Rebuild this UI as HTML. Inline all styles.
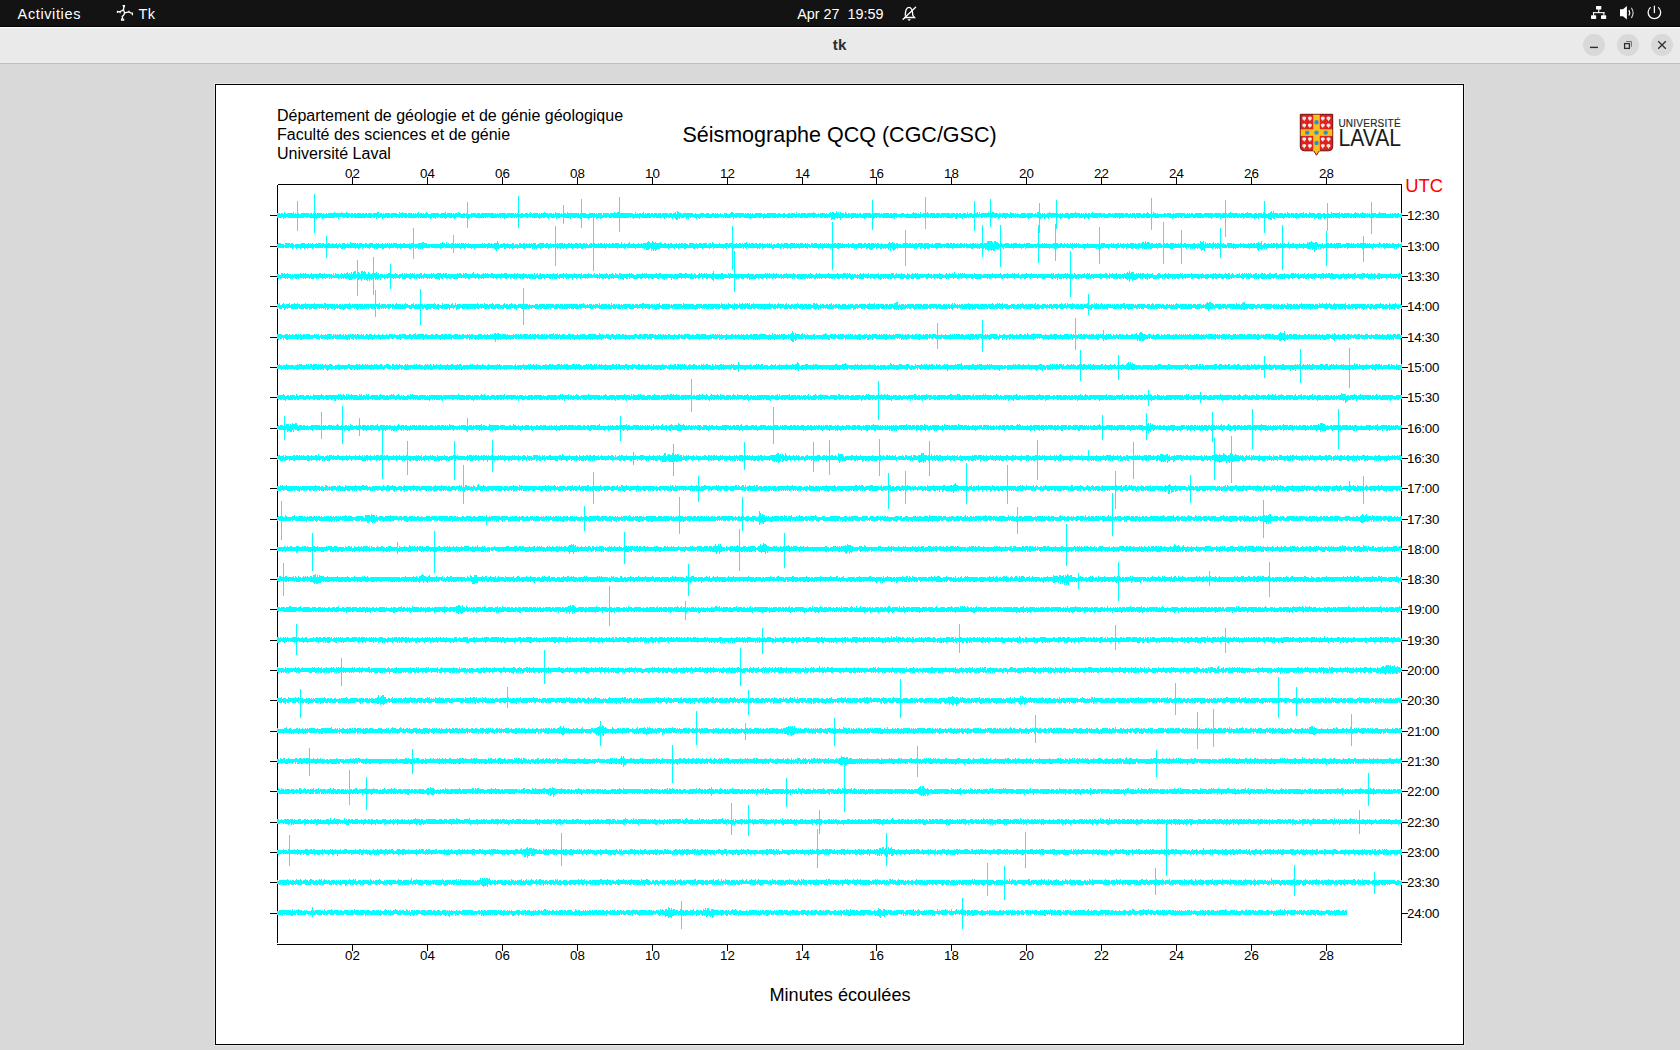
<!DOCTYPE html>
<html><head><meta charset="utf-8"><title>tk</title>
<style>
html,body{margin:0;padding:0;width:1680px;height:1050px;overflow:hidden;background:#d9d9d9;font-family:"Liberation Sans",sans-serif;}
#topbar{position:absolute;left:0;top:0;width:1680px;height:26px;background:#131313;border-bottom:1px solid #000;}
#titlebar{position:absolute;left:0;top:27px;width:1680px;height:36px;background:#ebebeb;border-top:1px solid #fff;border-bottom:1px solid #c2c2c2;box-sizing:border-box;height:37px;}
#frame{position:absolute;left:214px;top:83px;width:1251px;height:963px;box-sizing:border-box;border:1px solid #e6e6e6;}
#frame>div{position:absolute;left:0;top:0;right:0;bottom:0;border:1px solid #000;background:#fff;}
.tb{position:absolute;color:#fff;font-size:14px;white-space:pre;line-height:1;}
.wbtn{position:absolute;top:34px;width:22px;height:22px;border-radius:50%;background:#d9d9d9;}
</style></head><body>
<svg width="1680" height="1050" style="position:absolute;left:0;top:0">
<rect x="0" y="0" width="1680" height="26" fill="#131313"/>
<rect x="0" y="26" width="1680" height="1" fill="#000"/>
<rect x="0" y="27" width="1680" height="1" fill="#fff"/>
<rect x="0" y="28" width="1680" height="34" fill="#eaeaea"/>
<rect x="0" y="62" width="1680" height="1" fill="#eeeeee"/>
<rect x="0" y="63" width="1680" height="1" fill="#bebebe"/>
<g font-family="Liberation Sans" font-size="14.5" fill="#fff">
<text x="17.6" y="18.8" letter-spacing="0.62">Activities</text>
<text x="138.6" y="18.8" letter-spacing="0.3">Tk</text>
<text x="797.2" y="18.6" font-size="14.4" letter-spacing="0" xml:space="preserve">Apr 27  19:59</text>
</g>
<g fill="none" stroke="#fff" stroke-width="1.3" stroke-linecap="square" stroke-linejoin="miter">
<path d="M123.2 5.6H124.4V6.6M123.8 6.6L123.5 9.6L122.2 10.6L120.3 11.3L118.6 11.6L117.5 11.5V12.4M120.1 11.6V12.6M123.5 9.6L124.6 12.9L126.8 12.4L128.9 11.9L130.8 12.8L132.4 13V14.6M128.9 11.5V12.2M124.6 12.9L123.6 15.4L122.2 16.4L122.6 18.2L121.6 19.2V20.2H123.6V19.4"/>
</g>
<g fill="none" stroke="#fff" stroke-width="1.3" stroke-linecap="round">
<path d="M905.3 15.3C905.3 11.2 906.2 7.3 909 7.3C911.8 7.3 912.6 11.2 912.8 15.3L914.6 17.5H904.6"/>
<path d="M903.1 19.3L915.6 7.2"/>
</g>
<path d="M907.3 19.3H911L909.15 21Z" fill="#fff"/>
<g fill="#fff">
<rect x="1596" y="6" width="5.3" height="3.5" rx="0.6"/>
<rect x="1598.2" y="9" width="1.1" height="3.8"/>
<rect x="1592.9" y="12.1" width="11.6" height="1.1"/>
<rect x="1593" y="12.1" width="1.1" height="3.5"/>
<rect x="1603.3" y="12.1" width="1.1" height="3.5"/>
<rect x="1591" y="15.2" width="5.2" height="3.7" rx="0.6"/>
<rect x="1601" y="15.2" width="5.2" height="3.7" rx="0.6"/>
<path d="M1620 9.2H1623L1626.9 6V19.5L1623 16.2H1620Z"/>
</g>
<g fill="none" stroke="#fff" stroke-linecap="round">
<path d="M1629.1 10.6Q1630.3 12.8 1629.1 15" stroke-width="1.2"/>
<path d="M1631.6 8.2Q1634.6 12.8 1631.6 17.6" stroke-width="1.1" stroke-opacity="0.85"/>
<path d="M1650.3 7.6A6.3 6.3 0 1 0 1658.5 7.6" stroke-width="1.25"/>
<path d="M1654.4 6V12.6" stroke-width="1.25"/>
</g>
<text x="839.6" y="50.2" font-family="Liberation Sans" font-size="15.2" font-weight="bold" fill="#2e2e2e" text-anchor="middle">tk</text>
<circle cx="1594" cy="45" r="11" fill="#d9d9d9"/>
<circle cx="1628" cy="45" r="11" fill="#d9d9d9"/>
<circle cx="1662" cy="45" r="11" fill="#d9d9d9"/>
<rect x="1590" y="46.7" width="8" height="1.4" fill="#2e2e2e"/>
<rect x="1624.6" y="43.6" width="4.8" height="4.8" fill="none" stroke="#2e2e2e" stroke-width="1.3"/>
<path d="M1626.2 41.5H1631.4V46.8" fill="none" stroke="#6e6e6e" stroke-width="1"/>
<path d="M1658.2 41.2L1665.8 48.8M1665.8 41.2L1658.2 48.8" stroke="#2e2e2e" stroke-width="1.3"/>
</svg>
<div id="frame"><div></div></div>
<svg width="1680" height="1050" style="position:absolute;left:0;top:0" shape-rendering="crispEdges">
<g stroke="#000" stroke-width="1" fill="none">
<path d="M277.5 184.5H1401.5V942.5M277.5 184.5V942.5M277 944.5H1401.6"/>
<path d="M352.5 177V184M352.5 945V951M427.5 177V184M427.5 945V951M502.5 177V184M502.5 945V951M577.5 177V184M577.5 945V951M652.5 177V184M652.5 945V951M727.5 177V184M727.5 945V951M802.5 177V184M802.5 945V951M876.5 177V184M876.5 945V951M951.5 177V184M951.5 945V951M1026.5 177V184M1026.5 945V951M1101.5 177V184M1101.5 945V951M1176.5 177V184M1176.5 945V951M1251.5 177V184M1251.5 945V951M1326.5 177V184M1326.5 945V951M270 215.5H277M1402 215.5H1408M270 246.5H277M1402 246.5H1408M270 276.5H277M1402 276.5H1408M270 306.5H277M1402 306.5H1408M270 337.5H277M1402 337.5H1408M270 367.5H277M1402 367.5H1408M270 397.5H277M1402 397.5H1408M270 428.5H277M1402 428.5H1408M270 458.5H277M1402 458.5H1408M270 488.5H277M1402 488.5H1408M270 519.5H277M1402 519.5H1408M270 549.5H277M1402 549.5H1408M270 579.5H277M1402 579.5H1408M270 609.5H277M1402 609.5H1408M270 640.5H277M1402 640.5H1408M270 670.5H277M1402 670.5H1408M270 700.5H277M1402 700.5H1408M270 731.5H277M1402 731.5H1408M270 761.5H277M1402 761.5H1408M270 791.5H277M1402 791.5H1408M270 822.5H277M1402 822.5H1408M270 852.5H277M1402 852.5H1408M270 882.5H277M1402 882.5H1408M270 913.5H277M1402 913.5H1408"/>
</g>
<g stroke="#00ffff" stroke-width="1" fill="none">
<path d="M277 211.5h1125" stroke-dasharray="0 400 1 158 1 434 1 1 1 128"/>
<path d="M277 212.5h1125" stroke-dasharray="0 7 1 8 1 40 1 6 1 4 1 30 2 20 1 2 1 15 1 7 1 18 1 12 1 71 1 13 1 10 1 11 1 46 1 2 2 16 1 7 1 31 1 1 2 52 2 63 1 16 1 16 1 1 2 2 1 1 1 1 1 4 1 67 1 6 1 6 1 39 1 9 1 1 1 8 1 3 2 16 1 26 2 10 1 25 1 16 1 54 1 5 1 76 1 16 1 15 1 6 2 1 1 13 1 15 1 5 1 21 1 7 1 15 1 6 1 16 1 22"/>
<path d="M277 213.5h1125" stroke-dasharray="3 1 2 1 2 1 7 1 1 1 2 2 8 1 2 1 1 1 1 1 5 1 1 2 1 1 22 1 2 1 2 1 4 1 2 1 2 1 4 1 6 1 2 1 1 1 5 1 6 2 8 1 4 1 1 1 1 1 2 1 2 1 1 1 3 3 8 2 5 1 5 1 1 1 6 2 2 1 2 3 5 1 3 1 13 1 1 1 1 1 7 1 7 1 1 1 1 3 2 2 3 1 3 1 5 1 1 1 7 1 3 1 1 1 5 1 1 2 2 1 12 1 1 1 4 3 6 1 1 1 4 1 6 1 23 2 1 1 1 1 2 1 2 1 1 1 3 1 2 1 3 1 3 1 6 1 3 1 3 1 5 1 10 2 1 4 4 2 3 3 2 1 1 1 1 2 1 3 3 3 4 1 9 1 1 1 2 1 1 1 1 2 7 2 1 2 9 2 2 3 2 3 2 1 4 1 1 1 2 1 5 1 9 2 1 1 5 1 1 2 10 1 4 1 2 1 2 1 5 1 1 1 2 2 8 2 7 1 1 1 6 1 2 1 4 4 3 3 1 4 5 1 1 1 1 2 6 1 5 1 4 1 9 1 4 1 2 1 2 2 3 1 1 1 3 3 3 1 1 1 17 1 2 1 6 2 4 1 1 1 1 3 5 1 6 2 1 1 4 1 1 1 1 2 11 2 1 1 1 2 4 1 10 1 1 1 1 1 2 1 2 1 11 1 2 3 3 1 1 1 10 1 3 2 1 1 3 1 5 2 2 1 3 4 3 1 1 6 2 1 4 2 1 1 10 2 1 1 1 1 2 2 7 2 9 1 7 1 5 1 10 1 1 1 3 1 7 2 3 1 4 1 1 1 1 2 10 1 4 1 2 1 3 1 3 1 3 1 5 1 2 2 6 2 4 2 2 3 1 2 9 1 2 1 6 1 1 2 5 1 6 1 1 1 1 1 5 2 8 4 1 1 1 1 2 1 2 2 1 0"/>
<path d="M277 214.5h1125" stroke-dasharray="325 1 120 1 678 0"/>
<path d="M277 216.5h1125" stroke-dasharray="188 1 717 1 218 0"/>
<path d="M277 217.5h1125" stroke-dasharray="5 1 3 2 9 1 6 2 2 1 5 1 5 1 14 1 1 1 1 4 2 1 3 2 2 1 12 1 5 1 2 1 1 1 2 2 4 1 3 1 2 3 1 1 2 1 2 1 3 1 9 1 1 1 7 1 4 1 3 1 1 2 3 1 3 2 3 1 3 4 5 1 4 1 1 3 9 1 1 1 1 2 7 1 1 1 1 1 7 1 3 1 1 1 1 1 1 1 3 3 2 2 1 1 5 1 4 1 2 2 2 2 4 1 4 3 8 1 4 1 4 2 9 2 1 1 8 1 2 2 3 1 16 1 1 1 8 1 10 2 2 1 6 1 2 1 1 1 2 1 2 1 6 1 3 2 3 1 1 3 3 1 3 1 1 2 7 2 5 2 1 1 1 1 6 2 1 1 2 2 2 3 13 1 3 2 8 1 4 1 2 1 1 2 2 2 6 2 2 1 1 1 3 1 4 1 1 3 2 1 1 3 3 1 4 1 1 1 13 1 5 1 3 1 4 1 7 1 4 1 2 1 1 2 2 1 13 1 1 3 2 3 16 3 2 1 2 1 1 1 7 1 2 1 1 2 7 2 3 1 4 1 3 1 1 1 1 1 3 1 1 1 1 2 2 1 1 1 1 4 2 1 2 2 2 2 1 1 3 2 3 1 1 1 1 1 1 1 7 1 5 5 6 1 2 1 2 2 2 1 1 1 2 1 4 1 10 1 2 2 4 1 2 1 3 2 6 1 1 1 1 2 5 4 3 1 1 1 5 2 1 1 2 1 2 1 2 1 3 1 4 1 4 2 1 1 5 2 1 2 1 4 8 1 1 1 2 2 7 2 3 1 7 2 1 1 5 3 3 1 5 2 1 1 3 1 3 1 2 1 2 1 2 1 4 1 8 1 15 1 9 1 1 1 2 1 1 1 7 1 4 1 1 1 2 1 2 1 8 1 9 1 1 1 5 2 5 1 1 1 2 1 3 1 1 1 1 1 5 1 1 1 2 1 2 2 18 1 3 2 2 0"/>
<path d="M277 218.5h1125" stroke-dasharray="0 6 1 32 1 5 1 15 1 37 1 5 1 47 1 4 1 9 1 8 1 13 1 35 1 34 1 8 1 7 1 13 1 9 1 7 1 7 1 3 1 32 1 5 1 24 1 7 1 2 3 1 1 6 1 1 1 7 1 2 1 33 1 16 1 12 1 67 4 2 1 2 1 10 1 12 1 8 1 20 1 20 1 39 2 5 1 35 1 6 1 22 1 11 1 3 1 3 1 11 1 7 2 14 1 3 1 30 1 15 1 36 1 38 1 8 1 22 1 10 1 3 1 9 4 1 2 8 1 12 1 17 1 3 1 1 1 3 1 14 1 62"/>
<path d="M277 219.5h1125" stroke-dasharray="0 399 2 153 1 2 1 5 1 429 2 130"/>
<rect x="277" y="215" width="1125" height="1" fill="#00ffff" stroke="none"/>
<path d="M277 241.5h1125" stroke-dasharray="0 220 1 150 1 3 1 334 5 2 2 149 1 54 1 2 1 57 1 49 1 90"/>
<path d="M277 242.5h1125" stroke-dasharray="0 73 1 71 2 18 1 3 1 50 1 123 1 7 1 17 3 2 2 1 1 4 1 51 1 33 1 142 1 2 1 94 6 1 4 144 2 1 1 1 2 51 4 1 1 7 1 44 1 2 1 26 1 18 1 1 4 2 2 62 1 21 1 0"/>
<path d="M277 243.5h1125" stroke-dasharray="0 1 3 4 5 1 2 8 4 3 1 1 1 1 1 3 1 1 3 1 2 2 1 1 2 2 1 3 1 2 1 2 3 2 1 2 6 1 1 1 3 3 2 2 4 3 1 1 1 3 1 2 1 1 1 1 1 1 1 1 4 3 1 2 2 4 1 1 2 5 9 13 5 1 1 1 1 2 3 1 1 1 1 1 1 1 3 1 1 2 1 13 1 1 1 3 2 1 1 2 5 4 2 2 1 4 2 5 2 2 2 1 1 2 1 1 1 1 3 3 5 2 2 2 1 6 1 1 4 1 1 3 2 1 1 3 3 1 2 2 2 1 1 3 2 2 1 3 1 1 2 2 1 1 1 2 1 2 2 1 4 2 1 2 1 3 2 3 1 4 1 2 1 1 19 2 2 2 1 1 2 4 1 2 1 1 2 1 2 3 5 2 1 2 3 1 4 2 2 1 2 5 1 5 3 1 3 4 1 2 2 1 1 1 3 2 1 1 3 1 2 2 2 1 1 4 1 1 1 1 1 5 2 2 1 2 4 2 5 1 1 1 1 1 3 2 1 1 1 3 2 1 3 3 1 1 1 1 1 1 1 1 1 5 2 1 4 1 1 5 1 3 2 4 4 2 2 2 2 1 3 1 1 1 2 2 1 6 7 1 2 5 2 1 2 1 2 1 1 2 2 1 5 1 5 3 1 2 6 5 3 1 2 1 2 2 1 2 2 2 1 1 1 3 1 1 2 1 1 1 1 2 2 2 9 1 5 2 1 3 4 2 1 1 4 2 1 4 1 1 4 7 1 4 1 1 1 1 1 6 2 1 2 2 2 2 1 2 1 2 1 1 1 1 1 1 1 1 1 8 1 13 4 6 1 1 1 3 2 1 1 2 1 3 1 2 4 1 1 2 2 1 9 1 2 3 1 1 3 3 1 1 2 2 4 1 1 2 1 1 1 3 2 7 2 3 1 1 4 1 1 1 1 1 2 1 2 1 1 1 2 1 2 1 1 3 5 1 1 6 1 2 1 4 1 1 2 1 2 1 6 2 2 2 1 2 1 1 2 1 2 2 1 3 1 3 1 3 2 5 1 3 1 3 11 4 1 4 2 1 2 2 1 1 5 5 4 1 1 1 1 3 2 1 6 1 1 1 1 3 1 5 2 2 2 1 2 1 1 2 2 4 1 2 1 0"/>
<path d="M277 244.5h1125" stroke-dasharray="7 1 9 1 42 1 3 1 157 1 14 1 3 1 17 1 51 1 99 1 18 1 64 1 2 1 34 1 90 1 31 1 147 1 37 1 42 1 63 1 35 1 60 1 17 1 60 0"/>
<path d="M277 247.5h1125" stroke-dasharray="7 1 4 1 4 1 19 1 8 1 15 1 21 1 2 1 1 1 4 1 15 1 6 1 19 1 15 1 13 1 21 1 19 1 16 1 27 1 12 1 7 1 1 1 37 1 14 1 18 1 48 1 36 1 14 1 2 1 1 1 9 1 1 1 2 1 13 1 4 1 15 1 21 1 3 1 2 1 20 1 12 1 1 1 2 1 14 1 9 1 42 2 10 1 12 1 1 1 16 1 2 1 35 1 2 1 19 1 9 1 2 1 23 1 3 1 7 1 3 1 19 1 6 1 5 1 9 1 4 1 36 1 19 1 1 1 2 1 1 1 24 1 6 1 5 1 11 1 1 2 32 1 10 1 30 1 1 1 23 1 2 1 9 1 17 1 1 2 2 1 1 1 12 1 3 1 2 0"/>
<path d="M277 248.5h1125" stroke-dasharray="0 15 1 3 1 3 1 3 1 2 1 4 1 24 1 3 2 1 1 10 1 2 1 3 1 6 1 4 1 1 2 4 2 5 1 7 1 2 1 8 2 4 1 2 1 1 1 1 1 17 1 10 1 8 1 3 1 6 1 2 1 12 1 6 5 5 2 3 1 2 1 4 1 5 2 7 1 1 1 1 1 3 1 7 1 6 1 1 1 2 1 2 1 2 1 5 1 4 1 3 2 2 1 19 1 11 1 6 1 10 1 8 1 1 4 1 9 8 1 5 1 3 1 5 2 7 2 2 1 4 1 6 1 3 1 9 1 2 1 6 1 9 1 2 1 10 1 1 1 2 1 9 2 6 1 2 1 3 1 2 1 8 1 7 1 10 1 3 1 7 1 6 2 15 1 1 1 4 1 4 1 2 4 3 1 3 2 1 1 1 1 2 1 1 1 1 4 1 1 16 1 1 1 3 1 3 2 1 2 7 1 15 1 18 2 4 1 1 1 3 1 1 14 1 1 2 1 9 1 7 1 3 1 12 1 10 1 4 1 1 1 15 1 11 1 11 1 1 1 1 1 7 1 7 1 6 1 2 1 4 2 2 2 1 1 3 1 1 3 1 1 1 2 5 1 12 3 13 1 3 1 1 1 1 1 2 1 2 5 7 1 2 1 1 1 1 1 13 1 1 1 13 1 7 6 1 1 1 1 9 1 12 1 6 1 6 1 3 4 1 5 1 1 1 1 2 1 2 1 8 1 1 1 9 1 14 2 8 1 11 1 9 1 1 1 5"/>
<path d="M277 249.5h1125" stroke-dasharray="0 218 2 149 3 2 1 1 1 1 2 213 2 16 1 1 1 2 2 90 1 1 8 2 1 203 4 52 2 2 1 50 1 1 3 85"/>
<path d="M277 250.5h1125" stroke-dasharray="0 219 1 154 1 1 1 1 1 234 1 2 1 94 1 2 1 1 2 206 1 2 1 53 1 55 1 87"/>
<path d="M277 251.5h1125" stroke-dasharray="0 1037 1 87"/>
<rect x="277" y="245" width="1125" height="2" fill="#00ffff" stroke="none"/>
<path d="M277 271.5h1125" stroke-dasharray="0 77 2 1 1 3 2 1 1 348 1 415 1 272"/>
<path d="M277 272.5h1125" stroke-dasharray="0 70 1 3 1 1 3 1 2 2 5 2 1 7 1 96 1 239 1 240 1 172 1 1 1 1 3 268"/>
<path d="M277 273.5h1125" stroke-dasharray="0 4 2 1 1 2 1 12 1 2 1 1 1 5 1 7 2 3 1 8 1 1 1 5 1 2 1 1 2 1 1 1 1 1 3 1 3 1 5 2 2 2 5 1 1 9 3 4 1 6 1 1 1 1 1 3 1 1 1 1 1 5 2 2 1 6 1 1 1 3 4 2 1 1 2 10 1 1 2 2 1 1 2 5 2 3 1 5 1 1 1 1 1 3 2 8 1 2 3 7 1 2 1 5 1 10 1 2 1 2 1 12 1 3 1 5 1 2 1 7 1 6 1 6 1 5 1 4 1 6 1 5 1 2 1 3 2 8 1 1 1 10 1 1 1 1 1 9 1 2 2 18 3 3 2 4 1 2 1 4 1 1 1 2 1 1 1 5 2 7 2 5 1 1 1 17 1 16 1 1 1 1 1 3 1 2 1 9 1 6 1 16 1 5 1 2 1 8 1 8 1 5 3 1 1 1 1 10 1 2 1 4 1 9 1 12 3 2 1 4 1 5 1 4 1 2 1 1 1 10 1 10 1 6 1 2 1 2 1 1 1 3 1 1 1 1 1 1 1 9 1 17 1 7 1 6 1 4 1 1 1 3 1 7 1 4 1 19 1 1 1 4 1 6 1 1 1 6 1 9 1 2 1 1 1 10 1 4 2 2 1 2 1 3 1 7 1 1 8 2 1 1 1 1 1 1 2 3 1 4 1 5 2 5 1 2 1 11 1 1 1 8 1 10 1 10 1 1 1 3 1 5 1 2 2 2 1 6 1 2 1 1 1 1 1 1 1 1 1 4 2 4 2 1 1 4 2 4 2 7 1 6 3 1 1 2 1 5 1 3 1 5 2 6 2 2 1 1 2 1 2 10 1 4 1 5 2 6 3 2 1 3 1 2 1 3 2 10 1 8 1 2"/>
<path d="M277 274.5h1125" stroke-dasharray="2 2 10 1 1 1 15 1 22 1 1 1 4 1 39 1 3 1 1 1 12 1 4 1 11 1 6 1 24 1 14 1 17 1 46 1 5 1 1 1 2 1 6 1 12 1 23 1 9 1 2 1 2 1 9 1 5 1 3 1 15 2 37 1 19 1 2 2 29 1 26 1 24 1 2 1 13 1 10 1 5 2 36 1 1 1 2 1 1 1 10 1 9 1 14 1 10 2 3 1 21 1 10 2 12 1 15 1 8 1 19 1 16 2 16 1 16 1 18 1 2 1 4 1 3 1 4 1 17 1 8 1 3 1 31 4 4 1 1 1 19 1 20 1 4 1 13 1 6 1 3 2 4 1 11 1 4 1 1 1 6 1 10 2 10 1 9 1 5 1 11 1 21 1 16 1 19 1 25 0"/>
<path d="M277 277.5h1125" stroke-dasharray="51 1 72 1 31 1 9 1 45 1 19 1 54 1 28 1 34 1 72 1 93 1 68 1 59 1 103 1 81 1 52 1 26 1 44 1 9 1 50 1 68 1 31 1 4 0"/>
<path d="M277 278.5h1125" stroke-dasharray="0 1 1 1 1 4 1 1 1 2 1 1 1 2 2 1 1 4 1 1 1 3 1 1 3 2 1 1 1 3 1 2 1 3 1 1 1 6 1 2 1 1 1 1 2 1 5 1 2 2 5 1 10 1 4 1 1 3 1 2 1 5 1 1 1 3 1 2 4 3 2 3 1 1 1 2 1 1 1 1 1 3 1 1 1 1 1 3 5 1 2 3 1 2 2 2 5 7 1 2 2 5 1 2 1 2 1 1 1 9 1 2 1 3 1 4 2 3 1 2 2 1 1 3 1 1 2 3 1 1 2 1 4 2 4 2 1 4 2 1 1 1 3 2 1 3 1 2 1 1 1 3 1 3 1 3 1 4 1 1 1 9 1 1 1 2 2 1 1 2 2 1 1 1 1 4 1 1 4 2 2 1 1 3 5 2 2 3 1 2 1 2 3 3 2 3 3 1 1 4 1 1 2 1 2 3 1 3 1 4 4 1 1 2 1 3 1 3 2 3 3 1 4 1 4 5 1 6 1 1 1 2 3 3 1 1 7 2 1 2 2 3 1 2 1 2 1 2 1 5 1 1 1 3 1 4 1 1 1 2 2 1 3 1 2 1 1 1 1 1 1 2 2 1 1 1 1 1 1 3 1 3 1 1 2 1 1 2 3 2 1 3 2 2 4 3 1 1 5 3 1 2 1 2 2 3 4 1 1 1 1 1 2 1 2 2 1 5 4 2 3 2 3 2 4 6 2 3 1 2 1 2 1 1 3 4 1 1 1 4 1 3 2 2 1 4 1 4 2 2 6 6 1 1 2 4 1 5 2 4 1 6 1 5 1 3 2 4 1 6 1 4 3 6 2 2 1 1 1 1 3 1 1 2 1 2 4 2 2 1 1 2 1 4 3 1 1 2 1 6 2 4 1 2 1 3 2 1 2 1 2 2 1 1 13 2 1 1 1 2 3 1 1 3 4 1 1 3 1 1 1 2 2 3 1 1 2 1 2 3 1 2 1 5 2 4 3 1 1 3 3 4 2 1 2 4 3 2 1 1 2 1 1 10 2 2 1 1 2 4 1 1 1 1 1 2 4 1 1 1 3 2 1 2 1 1 1 1 5 3 2 2 1 5 2 3 1 1 2 1 1 2 2 1 1 5 1 2 1 1 1 4 1 1 4 2 4 2 1 1 1 2 1 2 1 1 1 4 2 1 1 5 1 1 1 1 1 1 1 2 3 1 1 4 1 4 1 1 1 1 1 2 2 2"/>
<path d="M277 279.5h1125" stroke-dasharray="0 72 3 6 1 2 1 2 1 1 2 1 1 1 1 3 1 1 1 2 1 58 1 132 1 50 1 40 1 6 1 40 2 35 1 101 1 28 1 176 1 69 1 1 1 2 4 11 1 254"/>
<path d="M277 280.5h1125" stroke-dasharray="0 84 1 5 1 1 1 343 1 415 1 2 1 269"/>
<path d="M277 281.5h1125" stroke-dasharray="0 852 1 272"/>
<rect x="277" y="275" width="1125" height="2" fill="#00ffff" stroke="none"/>
<path d="M277 302.5h1125" stroke-dasharray="0 619 2 309 1 1 2 32 2 157"/>
<path d="M277 303.5h1125" stroke-dasharray="0 2 1 3 1 5 1 4 1 2 1 7 1 8 1 9 2 23 1 29 1 16 1 8 1 7 1 20 1 7 1 9 1 2 1 21 1 6 1 7 1 11 1 6 1 71 1 15 1 11 1 30 2 15 1 23 1 37 1 6 1 5 1 4 1 2 1 2 1 1 1 1 1 3 1 15 1 8 1 7 1 10 1 15 2 1 1 14 1 37 1 4 1 19 4 54 1 1 1 13 1 23 1 4 1 1 1 2 1 19 1 12 1 25 1 3 1 1 1 4 1 14 1 6 1 1 1 4 1 21 2 27 1 23 1 29 7 23 1 5 3 42 1 13 1 17 1 2 1 3 1 2 1 4 1 10 1 34 1 8 1 5 1 6"/>
<path d="M277 304.5h1125" stroke-dasharray="3 2 3 1 4 1 9 1 22 1 11 1 2 1 2 1 1 1 7 1 11 1 16 1 5 1 4 1 2 1 6 1 1 1 4 3 3 1 2 1 2 1 2 1 1 1 10 1 2 3 1 1 5 2 2 2 1 1 4 1 17 1 3 1 4 1 5 1 5 3 2 1 2 1 4 1 2 2 5 1 4 1 1 5 3 1 6 1 8 1 4 1 3 1 14 1 6 2 1 1 3 1 1 1 3 1 1 1 6 1 2 1 1 1 2 1 1 1 2 1 1 1 8 1 2 1 3 1 11 1 2 1 1 1 4 2 8 1 1 1 9 1 11 2 6 1 4 1 12 1 4 1 1 1 3 1 1 1 4 1 11 1 22 1 2 1 7 1 2 1 1 2 2 1 5 1 3 1 3 1 3 2 5 2 1 1 2 2 2 1 3 1 1 1 2 1 2 2 4 2 1 1 3 2 3 1 7 1 8 1 8 1 3 1 4 1 4 1 1 1 3 1 1 1 7 1 7 1 5 1 8 1 3 2 2 1 1 1 2 1 2 1 2 1 1 1 1 1 2 1 9 1 5 1 7 1 6 1 8 1 4 3 4 2 2 1 4 1 2 1 5 1 2 1 2 3 4 1 1 1 3 1 5 1 4 1 2 1 8 1 3 1 3 1 5 2 2 1 5 1 3 1 1 1 5 1 1 1 1 1 3 1 5 1 8 1 1 1 8 2 3 1 3 1 6 1 2 2 2 1 1 1 1 1 1 1 4 1 7 1 4 1 3 1 4 2 1 1 9 1 6 1 4 1 8 1 4 1 14 2 3 1 11 1 2 1 1 1 1 2 2 1 1 2 5 1 2 1 2 1 15 1 3 1 13 1 13 2 2 1 15 1 2 1 3 2 9 1 2 2 2 1 5 1 1 1 1 1"/>
<path d="M277 305.5h1125" stroke-dasharray="1092 1 32 0"/>
<path d="M277 307.5h1125" stroke-dasharray="99 1 14 1 63 1 881 1 64 0"/>
<path d="M277 308.5h1125" stroke-dasharray="1 1 3 2 2 1 1 3 7 1 5 1 3 1 3 1 4 2 1 1 1 1 1 1 1 1 2 2 2 1 2 1 1 1 7 1 4 3 1 1 3 1 5 1 1 1 1 2 2 1 2 1 3 1 1 1 1 1 1 2 2 2 1 1 12 3 3 2 7 1 2 1 6 2 2 1 3 2 2 1 4 1 1 3 1 2 4 2 3 1 7 1 2 1 2 2 1 2 3 1 2 1 5 1 2 1 1 1 2 2 5 3 3 4 6 1 2 1 1 3 4 1 2 1 6 1 1 3 4 1 2 1 6 1 1 1 3 1 4 1 1 4 1 4 4 1 1 3 8 1 4 1 3 1 4 1 1 1 3 2 5 3 1 4 1 2 1 1 3 2 1 1 6 1 9 2 1 1 7 1 1 1 14 1 1 2 1 1 1 1 3 1 4 1 2 1 2 2 7 3 3 1 2 2 3 1 2 1 5 1 2 2 2 1 11 2 3 1 1 2 1 3 4 1 3 1 2 1 1 2 2 1 3 1 5 2 4 1 1 1 1 2 1 1 1 1 7 1 1 2 1 1 11 2 3 1 1 3 2 1 1 2 8 1 4 1 4 1 1 1 4 1 6 1 6 1 1 1 2 2 4 1 3 1 6 1 2 2 1 2 2 1 9 1 1 1 2 4 1 2 1 1 5 1 3 1 4 1 8 1 2 1 6 1 2 1 2 1 1 2 5 1 1 1 2 1 3 1 1 2 2 1 5 3 6 1 3 2 1 2 1 1 2 3 2 2 4 2 1 3 4 1 9 3 1 1 3 2 7 1 6 5 4 1 1 1 2 2 2 1 6 3 2 1 1 1 3 3 2 1 5 1 2 1 1 1 1 1 4 3 8 2 12 3 5 1 1 3 8 1 1 3 4 1 1 1 2 3 1 1 16 1 5 1 2 3 2 2 1 1 5 2 2 1 3 1 4 1 4 1 10 1 2 1 1 1 1 1 5 1 4 6 4 2 7 1 5 1 2 1 4 1 1 2 3 1 1 1 4 1 1 2 3 1 4 2 1 2 6 1 6 2 2 2 1 0"/>
<path d="M277 309.5h1125" stroke-dasharray="0 7 1 24 1 15 1 1 1 6 1 8 1 13 1 62 1 5 2 10 1 10 1 6 1 59 1 138 2 38 1 38 1 29 1 37 1 12 1 2 1 34 1 40 1 1 1 1 1 2 1 12 1 37 1 16 1 2 1 57 1 59 2 15 1 17 1 2 1 79 2 31 1 1 2 45 1 19 1 24 1 9 1 9 1 7 1 6 1 18 1 4 1 7"/>
<path d="M277 310.5h1125" stroke-dasharray="0 931 1 193"/>
<rect x="277" y="306" width="1125" height="1" fill="#00ffff" stroke="none"/>
<path d="M277 331.5h1125" stroke-dasharray="0 515 1 491 1 117"/>
<path d="M277 332.5h1125" stroke-dasharray="0 515 1 347 2 138 1 3 1 117"/>
<path d="M277 333.5h1125" stroke-dasharray="0 138 1 78 2 1 2 54 1 45 1 172 1 18 3 1 1 6 1 22 1 201 1 5 1 102 1 2 4 136 6 49 1 67"/>
<path d="M277 334.5h1125" stroke-dasharray="5 3 3 1 1 2 1 2 2 1 1 1 1 2 2 1 4 4 1 1 1 1 1 2 1 3 1 1 5 1 1 1 1 1 1 1 2 2 1 1 1 2 1 1 1 1 2 1 1 1 2 2 1 1 1 2 2 1 3 2 1 3 1 3 1 3 1 2 4 1 1 4 2 1 4 3 2 2 3 1 7 1 2 4 2 2 3 3 2 1 3 1 3 3 4 1 1 2 2 3 1 1 1 1 2 5 4 2 1 2 1 2 1 1 1 1 7 1 4 1 1 5 1 1 2 1 1 1 2 1 5 1 2 1 1 1 2 1 2 2 2 1 1 1 1 2 5 1 3 1 1 2 3 3 3 1 2 3 1 2 1 1 3 3 8 3 2 1 1 3 3 2 3 2 1 1 2 2 2 1 1 8 3 2 3 1 5 1 5 1 1 2 1 1 1 2 1 1 1 2 2 4 1 3 2 1 1 2 6 2 1 3 4 1 5 4 1 1 2 1 1 1 1 1 1 1 1 4 1 4 2 2 1 2 1 2 1 1 1 2 2 2 2 1 5 1 7 3 1 2 1 1 2 1 1 1 1 1 4 3 1 1 4 1 5 1 2 1 1 2 1 5 2 8 4 3 3 1 2 2 1 1 4 2 1 1 1 1 1 1 1 2 1 2 3 3 1 1 1 2 1 2 5 2 1 1 1 1 2 1 1 2 1 3 1 1 6 1 1 2 1 1 2 3 1 2 2 1 3 2 1 1 3 1 2 1 4 5 1 3 1 4 1 1 1 1 1 1 4 1 2 3 1 1 1 1 4 1 2 1 4 3 1 1 1 2 7 2 1 3 2 4 2 1 1 3 1 2 3 2 2 1 2 2 11 3 1 4 2 1 4 3 1 3 5 1 2 1 1 4 1 1 2 1 2 1 1 2 1 1 3 2 1 1 1 1 1 1 1 3 1 1 3 2 1 2 1 2 2 1 1 3 2 3 2 1 3 2 7 2 3 2 1 2 3 2 1 2 1 2 3 3 1 1 2 2 1 1 1 1 1 1 1 1 1 1 2 3 1 1 3 2 1 1 1 2 1 1 5 1 2 1 1 1 1 2 3 1 1 1 2 3 3 1 1 1 4 1 1 2 5 1 3 1 2 2 1 1 1 1 6 1 2 4 8 1 1 1 3 1 4 2 1 4 2 2 2 1 1 1 1 1 2 2 1 2 1 3 4 2 1 1 2 2 1 3 3 2 3 1 1 2 2 1 3 1 1 3 3 3 1 3 3 1 1 2 1 4 2 1 1 2 3 1 3 2"/>
<path d="M277 335.5h1125" stroke-dasharray="42 1 12 1 11 1 19 1 450 1 37 1 144 1 113 1 47 1 241 0"/>
<path d="M277 338.5h1125" stroke-dasharray="2 1 2 1 1 1 14 1 13 3 4 1 2 1 7 1 2 1 15 1 3 1 2 1 17 1 1 1 12 1 3 2 6 2 9 1 7 1 3 1 11 1 14 1 11 2 2 1 4 1 9 1 30 1 2 1 5 1 12 1 11 1 4 1 1 1 3 1 11 1 32 1 1 1 5 1 22 2 4 1 4 1 5 2 9 1 3 1 1 1 5 1 4 1 5 1 25 1 5 1 4 2 8 1 3 1 11 1 31 1 5 1 1 1 7 1 6 1 12 1 12 1 5 1 7 1 16 1 4 1 4 1 2 1 14 1 5 2 1 1 1 1 9 1 17 1 1 1 2 2 7 1 32 1 3 2 6 1 4 1 4 1 2 2 1 1 1 1 2 1 2 1 3 1 5 1 14 1 1 1 1 2 15 1 13 1 1 2 3 1 7 1 12 3 11 1 2 1 2 1 28 1 1 1 32 1 22 1 9 1 3 1 8 1 31 2 4 1 53 1 8 1 14 1 3 1 1 2 1 1 5 1 7 1 3 1 21 1 6 1"/>
<path d="M277 339.5h1125" stroke-dasharray="0 1 1 4 1 2 2 9 1 2 2 17 1 7 1 18 2 1 1 3 1 2 1 11 1 3 1 7 1 19 1 10 1 11 1 16 1 3 1 6 1 17 1 5 1 2 1 7 1 7 2 1 2 1 1 5 1 3 1 23 1 25 1 9 1 3 1 4 1 6 1 3 1 1 1 4 1 3 1 8 1 4 1 9 1 3 1 17 1 3 1 10 1 10 1 15 1 9 1 8 1 10 1 5 2 16 2 3 1 4 1 1 1 1 1 1 1 8 1 1 1 3 1 8 1 6 4 1 2 8 1 5 1 2 1 7 1 5 2 15 1 11 1 1 2 6 2 3 1 12 2 14 1 1 1 2 1 11 2 7 1 22 1 13 1 4 2 1 1 4 1 11 1 8 1 3 1 3 1 2 1 23 1 9 1 4 1 6 1 6 1 5 1 3 1 24 2 4 1 1 2 30 1 1 6 10 1 17 1 19 1 7 1 13 1 5 1 3 1 5 2 24 2 15 1 2 1 1 7 1 1 6 1 1 1 1 1 21 1 2 3 7 2 4 1 4 1 3 1 15 1 18 1 2 1 2 1 1 1 1 1 6 1 1"/>
<path d="M277 340.5h1125" stroke-dasharray="0 218 1 295 3 1 1 341 1 1 2 1 2 135 2 3 1 49 1 67"/>
<path d="M277 341.5h1125" stroke-dasharray="0 218 1 296 2 608"/>
<rect x="277" y="336" width="1125" height="2" fill="#00ffff" stroke="none"/>
<path d="M277 362.5h1125" stroke-dasharray="0 520 1 330 1 1 1 271"/>
<path d="M277 363.5h1125" stroke-dasharray="0 520 2 46 1 44 1 70 1 165 2 1 1 1 1 221 1 47"/>
<path d="M277 364.5h1125" stroke-dasharray="0 2 1 6 1 10 1 1 3 4 1 1 1 1 2 1 4 1 1 1 1 1 1 2 1 3 3 6 1 9 2 6 2 1 1 2 1 2 1 1 1 3 1 2 1 1 1 3 2 4 3 3 2 2 1 2 1 5 1 1 1 6 1 1 1 2 1 5 1 1 1 2 1 2 1 2 1 3 1 6 1 3 2 4 1 1 2 9 1 1 1 4 1 4 1 5 1 8 1 1 1 15 1 7 1 4 1 1 1 2 1 2 1 8 1 3 2 1 1 4 3 1 1 2 1 1 2 4 3 1 1 1 2 6 1 1 1 1 2 2 1 1 1 2 1 1 1 3 1 6 2 2 1 1 2 5 2 5 1 1 1 3 2 2 1 5 1 2 1 10 1 7 1 3 2 1 2 1 1 1 1 1 1 4 1 3 2 6 1 1 1 2 2 4 1 2 1 4 2 1 1 7 1 1 1 5 1 10 1 5 1 1 1 2 2 8 1 3 1 3 1 6 1 5 1 2 4 6 3 5 1 1 2 18 2 5 5 8 1 1 1 3 1 7 1 4 1 15 2 1 1 5 3 4 3 6 1 5 1 2 1 1 1 2 1 1 2 3 1 2 1 4 1 1 2 7 1 1 5 10 2 3 1 1 3 5 1 1 1 1 1 21 1 1 1 2 2 3 1 4 1 10 3 8 1 1 1 1 1 1 2 1 3 1 1 3 1 3 1 1 1 5 1 1 1 1 2 3 1 1 1 2 1 7 2 2 1 4 1 3 1 3 1 3 1 3 9 23 3 7 2 15 1 1 1 8 2 1 2 1 1 11 3 2 3 3 1 2 2 4 1 2 2 8 1 3 1 2 1 3 1 7 1 2 1 4 1 7 2 11 1 1 1 1 1 3 1 3 1 1 1 2 2 6 3 2 3 3 1 1 1 2 1 4 1 1 1 10 1 1 2 1 1 6 1 5 1 2 2 1 2 1 1 6 2 1 1 4 1 4 1 0"/>
<path d="M277 365.5h1125" stroke-dasharray="5 1 11 1 14 1 23 2 48 1 7 1 11 1 19 1 8 1 29 1 23 1 15 1 10 1 2 1 24 1 40 1 14 1 19 1 34 1 14 1 8 1 10 1 9 1 2 1 10 1 2 1 37 1 10 1 4 2 6 1 23 1 75 1 2 1 6 1 23 1 2 2 20 1 5 1 21 1 39 1 2 1 38 1 18 2 10 1 26 1 12 1 24 1 11 1 35 1 8 1 2 1 2 1 12 1 12 1 10 1 8 1 50 1 26 1 29 1 23 1 7 1 4 1 6 0"/>
<path d="M277 368.5h1125" stroke-dasharray="34 1 12 1 23 1 4 1 31 2 4 1 8 1 10 1 25 1 84 1 102 1 3 1 4 1 31 1 65 1 6 1 108 1 59 1 7 1 1 1 72 1 14 1 39 1 13 1 112 1 10 1 32 1 42 1 13 1 40 1 54 1 31 0"/>
<path d="M277 369.5h1125" stroke-dasharray="0 4 1 3 1 1 1 6 1 1 3 4 1 8 3 2 2 1 1 2 1 2 3 2 1 3 1 2 2 4 1 5 2 2 1 2 1 1 1 2 1 7 2 1 1 3 1 5 1 8 1 1 1 2 1 3 1 2 5 1 1 10 1 2 2 2 1 1 3 6 2 1 1 2 2 1 2 1 1 3 3 1 1 1 2 1 1 2 1 8 1 3 1 6 2 5 1 1 1 3 1 3 1 1 1 8 1 2 1 1 2 2 1 1 1 2 1 4 1 1 1 3 1 5 1 1 1 2 1 2 1 1 2 2 1 5 3 1 1 4 1 3 1 1 1 2 1 2 1 3 3 1 1 5 1 2 4 1 3 4 1 3 1 3 1 2 2 3 1 5 2 1 1 2 1 1 1 6 1 1 3 2 2 1 1 5 1 3 1 3 1 2 2 2 1 2 1 1 1 3 1 2 1 5 2 3 1 2 4 4 2 1 1 1 1 6 1 2 3 2 1 5 2 4 1 5 1 3 1 1 1 4 1 3 1 7 1 1 1 4 1 4 1 3 1 1 2 2 2 1 1 1 1 3 1 1 2 3 1 4 1 3 1 2 5 1 1 1 3 3 2 2 1 3 1 2 1 3 1 1 1 1 1 2 1 8 2 2 1 1 2 1 1 1 1 2 1 5 1 1 3 7 2 2 2 1 1 3 1 2 1 4 1 1 2 3 1 7 1 6 1 2 1 2 1 4 1 2 2 5 2 1 1 2 3 3 3 1 2 3 1 4 2 1 3 7 2 1 2 10 1 6 1 1 1 3 3 2 3 1 2 1 4 1 1 3 1 5 1 7 1 6 1 4 2 2 1 3 1 1 3 2 1 1 1 5 1 2 2 1 1 6 1 2 1 2 1 1 4 1 4 1 1 4 2 4 2 1 2 1 1 1 2 1 1 7 2 1 1 6 1 2 1 1 1 6 1 1 2 7 1 3 1 1 1 1 1 4 1 1 2 3 2 8 1 6 2 2 2 1 1 2 5 4 2 4 4 4 3 3 2 4 5 4 1 1 2 1 1 6 1 2 1 1 1 2 3 3 1 1 1 1 2 2 2 1 4 3 1 7 2 1 4 1 1 1 2 1 1 6 2 2 1 5 1 1 2 2 1 3 1 6 1 4 1 1 6 0"/>
<path d="M277 370.5h1125" stroke-dasharray="0 50 1 470 1 148 1 51 1 36 1 5 1 247 1 4 1 79 1 26"/>
<rect x="277" y="366" width="1125" height="2" fill="#00ffff" stroke="none"/>
<path d="M277 393.5h1125" stroke-dasharray="0 1064 1 60"/>
<path d="M277 394.5h1125" stroke-dasharray="0 6 1 12 1 16 1 7 1 16 1 1 1 2 1 2 1 1 1 2 1 7 1 1 1 4 1 1 1 11 1 10 1 1 1 4 1 11 1 1 1 45 1 22 1 2 1 19 1 55 1 1 1 5 1 7 1 11 1 16 1 18 1 6 1 1 1 4 1 1 1 13 1 12 1 2 2 1 1 2 1 22 1 2 1 3 1 4 1 5 1 2 1 12 1 3 1 9 1 29 1 1 1 9 1 18 1 6 1 4 1 17 2 26 1 1 1 9 1 2 1 2 1 2 1 26 2 10 1 23 2 5 3 13 1 9 1 1 1 10 1 19 1 22 1 40 1 4 1 20 1 15 1 21 1 5 1 6 1 28 1 1 1 31 1 18 1 5 1 10 1 11 1 3 1 2 1 5 1 13 1 5 1 10 1 28 5 8 1 5 1 15 1 25"/>
<path d="M277 395.5h1125" stroke-dasharray="8 2 2 1 5 1 2 1 5 2 3 1 1 2 11 1 20 1 1 1 10 1 3 1 2 1 3 2 7 1 6 1 2 1 6 1 4 1 1 1 1 3 2 1 8 1 7 1 1 1 13 1 22 1 5 1 1 1 5 1 6 1 2 2 4 1 9 1 10 1 1 1 4 2 1 2 5 1 8 1 1 3 10 1 11 1 2 1 1 1 4 2 19 1 1 1 4 2 6 1 14 1 1 1 12 2 4 1 8 1 19 1 11 1 2 1 12 2 9 1 5 1 5 1 4 1 6 1 5 1 2 1 1 1 1 1 13 1 3 1 3 1 1 1 9 1 5 1 3 1 1 1 3 1 2 1 1 2 4 1 10 2 7 1 6 1 4 2 3 1 6 1 2 1 10 1 14 1 1 1 4 1 3 2 2 1 1 1 9 1 2 1 11 1 3 1 9 1 14 1 9 1 2 1 17 1 6 1 2 2 8 1 5 1 2 1 1 1 1 1 9 1 8 1 5 3 2 1 6 1 4 1 2 1 2 1 3 1 5 1 4 1 18 1 5 1 1 1 7 1 1 1 3 1 4 1 2 1 5 1 8 2 2 1 3 1 1 1 1 2 17 1 5 2 1 1 9 1 4 2 3 1 19 1 3 1 4 2 5 1 1 1 4 1 4 1 5 1 9 2 6 2 7 1 2 2 4 1 3 1 1 1 4 1 2 1 4 1 1 1 5 1 2 1 2 1 1 1 8 1 2 1 7 1 13 1 2 1 3 1 2 1 11 3 6 0"/>
<path d="M277 398.5h1125" stroke-dasharray="304 1 235 1 31 1 63 1 14 1 473 0"/>
<path d="M277 399.5h1125" stroke-dasharray="0 1 1 1 2 1 3 2 5 1 2 1 2 4 3 3 1 3 2 2 3 3 1 2 3 2 2 1 2 2 1 1 3 1 1 1 2 1 1 1 1 1 11 1 1 1 2 3 1 1 7 2 6 1 1 4 2 2 2 1 6 2 1 2 1 1 1 1 4 1 1 1 7 1 1 1 1 1 4 1 2 2 1 6 2 3 1 1 6 1 3 2 4 1 2 1 1 1 7 1 2 3 2 1 2 1 2 1 1 3 1 3 2 3 1 1 1 3 3 2 3 1 2 1 1 1 1 2 4 1 1 1 3 1 7 2 1 2 1 1 1 3 1 1 1 1 2 3 2 1 1 2 4 1 4 2 2 1 4 2 1 2 4 1 2 1 2 1 3 2 2 1 2 1 3 2 7 1 7 1 1 1 9 1 1 1 4 2 11 1 3 1 2 1 1 7 5 1 1 2 2 1 2 1 1 1 2 1 1 1 1 1 2 2 5 1 1 1 1 1 1 1 1 1 1 4 3 1 4 1 10 1 1 2 5 4 4 2 2 1 2 2 6 1 2 2 2 1 1 1 2 2 2 1 5 2 1 1 2 2 1 4 1 4 3 2 2 2 1 1 1 2 1 1 9 2 2 1 2 2 3 1 1 2 2 3 1 1 2 2 6 3 5 1 2 4 1 2 1 1 1 1 2 1 3 1 2 1 2 3 2 3 2 1 3 1 1 2 1 2 1 2 4 1 10 1 2 2 2 1 2 1 2 1 2 1 1 1 1 2 4 1 1 1 1 1 1 2 1 1 1 1 1 1 1 2 2 1 3 2 4 2 1 1 1 1 1 1 3 1 6 2 3 2 4 4 1 3 2 1 6 1 1 1 4 2 1 1 10 1 3 3 2 2 6 1 3 1 7 3 1 1 1 1 2 3 1 1 2 1 1 2 2 2 3 1 2 1 8 2 6 1 8 2 2 1 1 1 5 2 3 1 1 1 4 2 1 1 2 1 2 2 8 2 1 1 1 1 9 2 4 1 3 2 3 3 5 2 4 4 1 2 1 1 2 1 6 1 2 1 1 1 2 1 2 1 2 2 5 3 1 1 1 3 3 2 2 2 8 1 6 1 3 1 1 2 12 1 2 2 2 1 2 1 3 2 3 2 1 1 1 1 2 2 8 1 3 2 2 1 2 3"/>
<path d="M277 400.5h1125" stroke-dasharray="0 8 1 48 2 93 1 12 1 30 1 44 1 45 1 50 1 10 1 82 1 38 1 21 1 90 1 29 1 18 1 11 1 85 1 4 1 31 1 31 1 21 1 51 1 70 1 94 1 25 1 1 3 8 1 33 1 11"/>
<path d="M277 401.5h1125" stroke-dasharray="0 1068 2 55"/>
<path d="M277 402.5h1125" stroke-dasharray="0 1068 1 56"/>
<rect x="277" y="396" width="1125" height="2" fill="#00ffff" stroke="none"/>
<path d="M277 423.5h1125" stroke-dasharray="0 15 1 2 2 381 1 469 1 1 1 169 3 79"/>
<path d="M277 424.5h1125" stroke-dasharray="0 9 3 1 1 1 5 24 1 15 1 12 1 26 1 20 1 50 1 31 1 7 1 23 1 85 1 26 1 26 1 8 1 8 1 6 2 3 1 57 1 131 1 32 1 17 1 19 1 13 1 58 1 1 1 79 1 47 2 1 1 1 1 68 1 6 1 32 1 21 1 34 1 1 5 52 1 24"/>
<path d="M277 425.5h1125" stroke-dasharray="0 1 1 1 3 3 3 1 8 1 3 1 2 2 1 3 9 1 1 1 1 1 1 2 4 1 1 2 3 2 1 3 2 1 1 1 3 3 1 1 1 1 1 1 4 1 2 1 4 1 3 2 5 1 2 1 2 3 1 2 3 1 3 1 2 3 1 1 3 1 1 1 3 1 2 1 2 3 3 2 1 1 3 1 3 1 1 1 1 1 5 5 1 1 5 1 1 1 3 1 1 1 7 1 2 4 10 1 5 4 2 2 3 2 1 3 1 2 4 2 1 4 2 2 2 1 3 3 1 1 1 2 1 1 1 3 3 1 3 1 6 1 1 1 4 2 2 2 2 1 6 1 3 8 1 1 1 1 1 3 2 1 8 1 2 3 6 1 1 1 1 2 1 1 1 1 1 3 1 2 1 1 1 2 2 2 2 2 4 1 11 1 1 1 2 1 1 1 1 1 1 1 4 2 4 2 1 1 2 3 1 5 7 1 1 2 2 1 3 1 2 3 3 3 3 1 2 3 6 2 1 1 1 3 4 2 1 1 1 1 3 3 2 1 3 1 2 2 3 3 2 1 2 2 1 1 1 1 2 1 1 1 1 1 3 1 3 3 1 1 2 3 1 3 4 2 4 1 3 3 1 1 5 1 8 1 1 1 1 2 1 1 1 1 1 1 1 1 1 1 2 2 8 1 3 1 3 1 3 1 3 1 4 2 1 1 7 3 1 1 6 1 6 1 5 1 3 1 1 3 2 1 1 1 1 1 3 1 6 1 1 2 1 2 1 2 2 1 3 1 3 1 3 3 5 1 1 4 1 2 2 1 7 1 3 1 2 1 5 1 2 1 2 2 6 1 3 2 5 1 4 1 1 1 1 1 1 1 1 2 2 2 4 5 7 1 1 2 8 2 3 1 4 1 1 1 5 3 3 1 6 1 1 1 2 2 2 3 1 1 5 6 4 1 1 1 1 1 3 1 2 1 1 1 1 1 2 1 3 1 2 1 1 1 2 1 1 1 1 1 2 1 2 2 4 2 3 1 3 1 1 2 2 1 4 1 15 1 1 1 1 2 1 1 1 1 1 1 2 1 6 1 4 1 1 1 1 2 2 1 4 1 1 2 2 1 13 1 1 2 2 1 5 1 2 1 6 1 2 1 1 1 3 4 1 4 5 2 1 1 3 3 6 1 2 1 1 1 1 1 3 2 2 0"/>
<path d="M277 426.5h1125" stroke-dasharray="210 1 214 1 54 1 21 1 202 1 12 1 71 1 57 1 59 1 216 0"/>
<path d="M277 428.5h1125" stroke-dasharray="1124 1"/>
<path d="M277 429.5h1125" stroke-dasharray="1 1 15 1 14 1 4 1 6 1 4 1 1 1 2 1 11 1 10 2 3 3 20 1 5 1 1 1 8 1 2 1 1 1 8 1 28 1 8 1 3 1 2 1 1 1 1 1 11 2 23 2 2 1 13 1 5 1 6 1 3 1 30 1 20 1 5 1 13 1 12 1 1 1 3 1 8 1 8 1 5 2 3 3 2 2 6 1 3 1 17 1 3 1 1 2 4 1 3 1 5 1 3 1 11 2 4 1 18 1 10 1 16 2 4 1 29 1 2 1 5 1 8 1 9 1 2 1 2 1 5 2 4 1 7 1 5 1 6 1 4 1 1 1 6 1 1 1 2 1 5 1 4 1 1 1 10 1 5 1 11 1 3 1 12 1 3 1 4 1 7 1 1 2 3 1 3 1 5 1 1 1 2 1 5 2 3 1 3 1 19 1 4 1 4 1 2 2 2 1 6 1 3 1 2 2 2 2 4 1 4 1 4 1 2 2 7 1 2 1 5 1 11 1 6 1 9 1 1 1 16 1 1 1 25 4 8 1 13 1 6 2 7 1 7 1 2 1 2 1 8 1 8 1 20 2 2 1 4 1 7 1 13 1 19 2 24 1 17 2 6 1 1 1 1 1 10 2 3 1"/>
<path d="M277 430.5h1125" stroke-dasharray="0 10 5 1 1 3 2 13 1 31 1 3 2 13 1 2 1 4 1 6 2 3 1 1 1 5 1 1 2 1 1 4 1 1 1 3 1 1 1 31 1 11 1 12 1 12 1 1 1 8 1 1 1 2 1 24 1 11 1 23 1 2 1 29 2 13 1 3 1 14 1 3 1 23 1 14 1 2 2 6 5 17 1 8 1 16 1 13 1 2 1 14 1 45 1 1 1 5 1 10 1 6 1 5 1 1 1 2 1 20 1 4 2 6 2 13 1 1 2 1 1 1 1 19 1 3 1 4 1 2 1 5 1 1 1 5 1 32 1 28 1 25 1 3 1 4 1 3 1 11 1 5 2 15 2 22 1 8 1 5 1 12 1 11 1 4 4 2 1 12 1 2 1 2 2 3 1 2 1 6 1 2 1 3 1 5 1 1 1 3 2 3 1 10 1 6 2 3 2 19 1 4 1 4 1 1 1 4 1 10 1 8 1 12 1 10 1 3 1 1 4 6 1 7 1 12 2 1 1 12 1 7 1 4 1 3 2 1 1 12"/>
<path d="M277 431.5h1125" stroke-dasharray="0 10 1 2 2 1 1 854 1 1 1 169 1 81"/>
<path d="M277 432.5h1125" stroke-dasharray="0 871 1 253"/>
<rect x="277" y="427" width="1125" height="1" fill="#00ffff" stroke="none"/>
<path d="M277 453.5h1125" stroke-dasharray="0 387 2 6 1 104 2 6 1 52 1 82 3 299 1 6 1 171"/>
<path d="M277 454.5h1125" stroke-dasharray="0 41 1 243 1 101 2 2 2 2 2 1 1 1 2 97 3 1 1 1 1 2 1 52 5 78 3 7 1 128 1 99 3 3 2 47 2 2 1 3 2 5 1 1 1 2 1 166"/>
<path d="M277 455.5h1125" stroke-dasharray="0 1 2 3 1 1 1 7 2 1 2 1 1 1 1 1 1 3 2 2 1 3 2 1 1 8 1 1 3 1 1 3 2 7 1 2 1 5 1 3 1 2 1 1 1 1 2 2 1 3 1 1 3 1 2 2 1 1 2 5 1 2 1 2 1 3 1 2 1 9 1 1 1 2 1 3 1 4 1 1 1 4 1 6 1 8 3 1 1 9 1 1 3 1 1 1 2 1 1 2 1 1 2 1 1 1 1 2 1 6 1 1 1 1 1 1 1 7 1 1 1 3 1 4 2 2 1 5 5 1 1 2 1 1 1 4 2 8 2 1 2 5 1 6 1 2 1 3 1 2 2 1 2 2 2 3 1 2 1 6 1 2 2 2 1 3 1 1 2 3 1 8 1 4 4 5 1 3 1 3 1 1 1 3 3 1 12 1 2 1 1 2 1 1 1 4 1 2 1 7 2 2 2 1 1 1 2 1 1 3 1 1 1 6 1 4 1 1 1 2 4 1 2 1 1 1 1 2 1 5 1 1 2 2 1 5 11 1 2 1 2 2 1 3 1 2 1 1 1 7 2 9 3 3 2 1 1 2 1 1 2 2 1 2 5 8 2 3 1 3 1 11 1 7 1 2 1 2 2 1 1 2 1 2 1 6 1 2 2 4 1 1 3 2 9 1 1 2 1 2 1 1 2 1 2 6 1 4 1 1 1 2 1 2 1 11 1 1 3 1 4 1 1 2 1 3 1 1 1 3 1 1 1 1 1 5 2 4 2 1 1 5 1 4 3 6 3 1 1 2 1 1 1 5 1 3 1 1 1 2 3 8 1 1 1 5 1 2 1 14 1 6 1 2 5 2 1 3 1 2 1 5 2 5 1 1 1 1 1 1 1 4 3 1 3 2 1 3 2 1 8 1 1 4 1 1 6 1 1 2 2 2 1 2 2 6 1 2 1 1 1 5 15 1 5 1 5 1 1 1 1 3 1 2 1 1 1 1 1 5 1 9 1 3 1 5 3 5 1 2 1 1 2 2 1 5 1 2 1 1 1 2 1 1 1 6 2 4 2 1 3 4 1 1 1 2 2 2 1 2 2 4 1 3 1 4 3 2 1 7 1 2 2 8 1 3 1 1 1 2 1 1 2 1"/>
<path d="M277 456.5h1125" stroke-dasharray="7 1 39 1 38 1 58 1 13 1 11 1 16 1 55 1 4 1 5 1 8 1 3 1 32 1 20 1 14 1 1 1 65 1 12 1 5 1 5 1 92 1 3 1 16 1 15 1 6 1 34 1 5 1 10 2 6 1 7 1 45 1 72 1 90 1 2 1 44 1 32 1 40 1 5 1 21 1 5 1 30 1 22 1 12 1 27 1 28 0"/>
<path d="M277 459.5h1125" stroke-dasharray="1 1 9 1 32 1 9 1 2 1 3 1 10 1 3 1 75 1 23 1 2 1 64 1 5 1 7 1 10 1 11 1 11 1 29 1 8 1 26 1 1 1 5 1 44 2 32 1 12 1 44 1 26 1 1 1 86 1 8 1 69 1 2 1 10 1 16 1 8 1 26 1 30 1 13 1 30 1 9 2 24 1 23 1 3 1 27 1 54 1 11 1 16 1 11 1 24 1 24 1 2 1 2 1 29 1 2 1 5 0"/>
<path d="M277 460.5h1125" stroke-dasharray="0 3 3 1 2 3 1 3 2 12 3 1 1 4 1 2 1 2 1 1 1 2 3 12 1 4 1 3 1 10 4 1 1 2 1 5 1 2 1 8 1 7 1 5 1 1 1 4 2 2 1 1 3 1 1 1 1 2 1 3 1 5 3 1 2 1 1 4 1 1 2 5 1 11 1 2 3 2 1 2 1 4 1 3 1 6 1 2 1 6 1 3 1 2 1 6 1 3 1 3 1 2 1 1 1 4 1 2 2 3 1 10 3 3 1 4 2 3 1 2 1 1 1 2 1 1 3 1 1 2 1 1 1 1 1 1 1 10 1 6 1 6 2 2 2 5 2 1 1 3 1 3 1 4 1 1 1 4 1 1 3 2 1 1 5 1 14 3 2 5 1 5 1 9 1 2 1 1 1 4 2 4 1 1 1 3 1 1 1 1 2 1 1 1 2 1 1 8 1 1 3 1 2 2 2 6 1 2 9 1 2 1 3 2 1 3 1 3 1 5 2 5 1 2 1 1 1 1 1 7 1 11 3 1 4 5 1 2 2 1 1 4 2 1 2 1 2 1 2 1 3 2 2 15 1 13 1 1 1 5 8 2 1 3 1 2 1 1 2 1 1 1 1 2 1 4 1 2 2 5 3 2 1 2 1 2 3 1 1 4 1 2 2 1 2 5 1 1 1 3 1 1 3 2 1 4 2 7 2 4 1 1 1 2 1 1 2 9 1 9 2 2 1 1 1 2 1 5 2 11 1 4 1 3 1 1 1 1 2 1 1 1 1 4 1 2 1 1 1 1 1 5 1 1 3 2 1 1 2 13 1 2 2 1 1 7 2 1 7 1 3 3 2 6 2 7 1 6 1 3 3 3 1 2 1 3 26 2 1 1 2 5 1 6 2 2 3 2 1 3 1 1 1 3 1 6 2 1 4 1 1 6 1 1 2 2 1 3 1 4 1 6 1 4 1 4 1 1 1 5 3 5 2 3 1 1 1 1 1 2 1 4 2 1 1 6 1 1 1 1 1 1 1 3 1 1 2 1 1 10 1 1"/>
<path d="M277 461.5h1125" stroke-dasharray="0 210 1 174 4 3 6 1 2 96 1 1 1 1 2 2 1 43 1 12 1 22 1 55 4 1 1 1 1 54 1 180 1 1 1 1 1 1 1 5 1 41 1 1 5 4 1 1 2 2 2 168"/>
<path d="M277 462.5h1125" stroke-dasharray="0 396 1 104 1 60 1 79 1 3 1 243 1 51 1 6 1 2 1 172"/>
<rect x="277" y="457" width="1125" height="2" fill="#00ffff" stroke="none"/>
<path d="M277 483.5h1125" stroke-dasharray="0 678 1 446"/>
<path d="M277 484.5h1125" stroke-dasharray="0 201 1 475 2 213 1 232"/>
<path d="M277 485.5h1125" stroke-dasharray="0 3 1 1 1 3 1 28 1 9 2 12 1 5 1 9 1 6 2 2 1 16 1 3 2 3 1 11 1 8 1 21 1 5 1 17 1 1 1 3 2 6 1 3 2 4 1 29 1 5 1 1 1 23 1 2 1 5 1 17 1 6 1 7 2 4 1 6 1 16 1 3 2 3 1 10 1 32 1 1 1 2 1 15 1 4 1 1 1 5 2 10 1 1 1 7 1 8 2 1 1 3 2 1 1 3 1 4 1 1 2 29 1 4 1 16 1 16 1 7 1 20 2 2 1 1 2 7 3 8 1 7 2 11 1 4 1 19 1 5 1 9 2 5 2 1 5 13 1 6 1 13 1 27 1 1 1 3 1 6 1 2 1 8 1 25 2 7 1 6 1 4 1 9 1 13 1 4 1 3 2 2 1 1 1 9 1 8 1 14 1 2 3 4 1 12 1 1 1 34 1 1 1 7 2 6 1 5 1 7 1 6 1 7 1 1 1 2 1 2 1 11 1 9 1 1 1 13 1 17 1 3 1 9 1 2 1 3 1 8 1 11 1 2 1 20"/>
<path d="M277 486.5h1125" stroke-dasharray="2 1 19 1 1 1 18 1 2 2 3 1 1 1 5 1 4 1 1 2 23 1 1 2 9 1 3 1 10 2 4 1 17 1 11 1 14 1 2 1 4 1 6 1 1 1 5 1 1 1 2 2 9 1 16 1 4 1 9 1 18 1 18 1 1 1 6 2 6 1 3 1 2 1 8 1 1 1 10 1 7 1 4 1 2 1 1 1 8 1 11 1 13 1 1 2 10 1 4 1 12 1 12 1 10 1 17 1 7 1 2 1 3 1 1 1 8 1 2 1 3 1 4 1 3 1 4 1 20 1 4 2 1 1 2 1 5 1 4 1 1 1 14 1 27 1 14 1 2 1 8 1 2 2 4 1 10 1 1 1 2 2 1 1 3 1 2 1 41 1 3 1 2 1 3 1 11 1 3 1 3 1 7 1 8 1 8 1 8 1 3 2 2 1 26 1 3 1 9 3 4 1 3 1 5 1 14 1 6 1 4 1 8 1 2 1 4 1 6 1 11 1 22 2 6 1 3 1 17 1 3 1 1 1 3 1 2 1 32 1 7 1 13 2 25 1 2 1 6 1 1 1 7 1 10 1 13 1 7 1 3 1 32 1"/>
<path d="M277 489.5h1125" stroke-dasharray="180 1 64 1 138 1 44 2 6 1 7 1 23 1 290 1 43 1 153 1 94 1 71 0"/>
<path d="M277 490.5h1125" stroke-dasharray="4 2 1 3 6 1 1 2 3 1 1 1 2 1 1 2 2 2 2 1 1 2 1 1 3 1 1 1 1 1 1 1 2 3 1 1 1 1 6 1 3 2 1 1 1 1 1 2 2 6 1 2 3 1 1 2 1 3 2 3 1 1 2 3 2 1 1 3 2 1 2 1 2 2 1 2 1 2 2 1 2 4 2 1 1 1 2 1 4 2 3 1 1 1 1 1 5 3 1 2 1 1 1 1 1 1 1 2 1 2 1 1 2 1 2 3 3 1 1 1 3 2 2 2 2 1 4 2 2 1 2 2 1 1 2 1 1 2 1 1 1 1 4 1 2 2 3 5 3 2 2 1 1 1 1 3 1 3 3 1 1 2 1 1 1 2 2 1 1 1 2 3 1 1 2 1 4 1 1 1 2 1 2 1 2 1 1 2 2 1 1 3 3 4 3 1 4 3 2 5 1 1 1 1 1 2 3 2 1 1 1 1 2 2 2 1 2 3 1 2 2 1 2 1 5 1 1 3 1 1 1 4 1 1 3 1 8 4 1 2 1 5 2 1 2 2 4 2 4 8 1 1 2 1 2 1 1 1 6 2 7 1 2 1 1 1 4 1 2 1 1 1 1 1 1 1 1 1 2 2 1 1 1 1 2 1 1 2 1 1 2 2 11 1 1 2 6 1 6 1 1 1 3 2 2 1 2 1 1 1 2 1 2 2 1 1 1 1 2 3 2 1 6 3 2 2 1 4 5 1 1 2 3 1 1 2 1 3 1 2 1 3 1 4 2 1 1 1 4 2 3 1 1 1 1 2 2 1 12 1 1 2 1 1 2 2 2 3 3 3 1 3 1 3 1 3 2 2 2 1 3 1 2 3 2 1 1 1 1 1 1 1 4 1 3 2 1 5 2 1 2 4 1 1 2 3 3 1 1 2 2 1 5 1 1 4 1 1 4 3 2 1 1 2 2 3 1 1 1 2 1 1 1 1 3 1 2 1 1 2 1 1 1 6 1 3 3 2 3 4 2 1 2 1 1 2 3 1 1 1 2 1 5 3 1 1 1 1 1 1 3 1 2 1 3 1 3 1 2 5 2 1 1 3 1 2 4 2 4 1 1 2 1 4 3 1 1 1 2 1 4 1 4 3 1 1 6 1 2 6 1 1 2 1 1 1 1 1 2 2 1 3 2 4 1 1 3 1 1 1 5 2 4 1 1 1 6 2 2 1 1 3 4 2 3 1 2 1 3 2 4 2 3 1 1 4 1 1 1 1 1 2 6 1 1 1 1 3 1 3 2 1 3 2 2 3 4 1 5 3 2 1 3 0"/>
<path d="M277 491.5h1125" stroke-dasharray="0 22 1 94 1 9 1 29 1 29 1 48 1 110 1 11 1 169 1 12 1 8 1 110 1 2 1 8 1 1 1 28 1 7 1 131 1 13 1 28 1 2 2 1 3 1 1 100 1 10 1 5 1 4 1 29 1 57 1 15"/>
<path d="M277 492.5h1125" stroke-dasharray="0 676 1 214 2 1 1 230"/>
<path d="M277 493.5h1125" stroke-dasharray="0 891 2 232"/>
<rect x="277" y="487" width="1125" height="2" fill="#00ffff" stroke="none"/>
<path d="M277 513.5h1125" stroke-dasharray="0 483 1 641"/>
<path d="M277 514.5h1125" stroke-dasharray="0 94 1 388 1 1 1 506 2 91 1 3 1 35"/>
<path d="M277 515.5h1125" stroke-dasharray="0 8 1 8 1 50 1 19 5 1 4 1 1 13 1 206 1 31 1 112 1 17 1 1 3 19 1 6 1 7 1 15 1 113 1 35 1 19 1 22 1 51 1 24 1 22 1 54 1 9 1 14 1 6 1 27 1 20 1 19 1 1 1 1 3 90 3 1 2 5 1 29"/>
<path d="M277 516.5h1125" stroke-dasharray="0 1 1 1 3 2 2 5 3 1 1 1 5 1 1 2 1 1 3 1 2 1 1 1 2 1 1 2 1 1 3 1 2 1 1 1 2 1 1 1 1 1 5 1 4 4 7 2 10 1 1 2 4 2 13 1 3 1 4 2 4 1 1 2 2 2 1 4 4 1 6 1 10 1 4 1 2 1 1 4 2 2 5 2 2 3 5 1 1 4 1 1 9 1 7 2 1 1 1 1 3 2 1 1 3 2 2 2 3 1 1 1 3 2 1 1 1 1 2 1 1 1 1 2 1 1 2 1 1 1 1 2 2 1 2 2 3 1 1 1 1 4 1 2 3 2 11 1 6 2 2 1 1 2 1 1 1 3 1 1 4 1 3 2 1 1 3 1 3 1 1 2 10 2 4 1 6 1 2 1 1 2 1 1 1 1 3 2 1 1 5 1 3 1 2 1 3 1 1 1 1 1 1 2 2 1 1 2 3 1 12 2 1 2 2 1 3 2 3 3 4 2 7 1 1 1 1 3 1 1 5 1 3 1 3 1 4 4 1 1 5 2 2 1 1 1 7 5 3 5 10 4 3 2 1 1 7 4 6 2 4 2 3 1 1 1 1 1 2 1 1 7 4 1 2 3 3 5 3 1 1 1 2 3 4 1 8 1 4 1 3 3 1 1 3 2 3 1 2 2 2 1 1 2 2 1 1 1 6 1 5 1 4 1 2 1 1 2 6 3 1 1 1 1 2 2 2 1 3 2 8 3 1 1 6 1 1 1 1 1 2 1 3 5 4 1 1 2 2 2 1 1 1 2 3 1 4 1 1 2 2 1 3 1 4 1 1 1 3 2 2 1 1 1 1 2 1 1 4 3 1 1 4 1 3 1 3 1 1 2 2 1 2 3 9 1 5 2 7 2 3 2 2 1 1 2 5 3 2 1 3 2 4 1 2 1 5 4 5 1 2 1 8 2 4 1 1 1 3 3 2 1 1 2 1 1 1 1 11 1 4 2 1 1 2 3 8 1 2 1 6 1 1 2 2 1 3 1 1 3 2 1 2 1 2 2 3 1 6 5 5 3 1 2 2 2 11 1 3 1 6 1 4 1 4 2 1 2 1 2 2 0"/>
<path d="M277 517.5h1125" stroke-dasharray="87 1 422 1 80 1 33 1 382 1 116 0"/>
<path d="M277 519.5h1125" stroke-dasharray="562 1 562 0"/>
<path d="M277 520.5h1125" stroke-dasharray="1 1 2 1 9 1 1 2 12 1 6 1 3 1 14 1 1 1 4 2 1 1 9 2 5 1 17 1 2 1 12 4 1 2 1 2 5 1 7 1 5 1 1 1 6 2 1 1 2 1 4 1 7 1 7 1 3 1 3 1 17 1 5 1 1 1 1 1 3 2 2 1 1 3 12 2 8 1 1 1 7 1 4 1 1 1 2 2 13 1 2 1 7 1 4 1 1 1 3 1 8 1 4 1 2 1 7 1 4 1 2 1 2 1 2 1 7 1 9 2 24 1 15 1 4 1 24 1 1 1 1 1 1 1 3 1 3 2 2 1 1 1 6 2 4 1 4 1 24 1 3 1 7 1 1 1 10 1 3 1 2 1 2 2 4 3 16 1 1 1 5 1 6 1 5 1 4 2 1 1 1 1 7 2 1 2 9 1 5 2 5 1 3 1 3 1 26 1 2 3 6 1 7 1 12 1 3 1 1 1 1 2 5 1 2 2 1 1 13 1 1 1 6 1 16 1 2 1 8 1 4 1 2 1 7 2 1 1 3 2 2 2 3 2 3 1 1 1 1 1 12 2 10 2 1 1 1 1 4 2 3 3 7 1 3 1 9 1 24 1 3 1 6 1 3 2 2 1 3 1 2 1 4 2 4 1 8 1 15 1 3 1 15 1 19 1 3 1 7 1 10 1 1 2 10 1 6 1 10 1 4 1 4 2 3 1 2 1 18 1 1 1 2 1 3 1 2 1 2 2 8 1 6 0"/>
<path d="M277 521.5h1125" stroke-dasharray="0 29 1 9 1 12 1 1 1 2 1 1 1 24 1 5 3 1 5 1 1 5 1 6 1 15 2 44 1 18 1 6 1 17 1 1 1 3 1 5 1 1 1 8 1 37 1 4 2 10 1 14 1 21 1 4 1 21 2 8 1 2 2 12 1 14 1 2 1 5 1 9 1 47 1 5 1 4 8 4 3 17 1 27 1 16 1 6 1 2 1 28 1 14 1 6 1 11 1 3 1 5 1 9 1 3 1 4 1 10 1 5 1 14 1 31 1 14 1 5 1 13 1 4 1 61 1 20 1 1 1 8 1 3 1 5 1 15 1 8 1 4 1 1 1 7 1 28 1 3 1 10 3 8 1 3 1 4 1 3 1 10 7 40 1 5 1 19 1 22 6 1 1 3 1 1 1 14 2 12"/>
<path d="M277 522.5h1125" stroke-dasharray="0 90 2 3 1 1 1 384 2 1 2 502 1 1 1 1 1 90 2 39"/>
<path d="M277 523.5h1125" stroke-dasharray="0 486 1 502 1 1 1 133"/>
<rect x="277" y="518" width="1125" height="1" fill="#00ffff" stroke="none"/>
<path d="M277 543.5h1125" stroke-dasharray="0 486 1 638"/>
<path d="M277 544.5h1125" stroke-dasharray="0 294 1 1 1 141 1 2 1 1 1 39 1 2 3 81 1 326 1 227"/>
<path d="M277 545.5h1125" stroke-dasharray="0 132 1 67 1 91 5 1 1 139 1 2 1 1 1 16 1 22 1 1 5 21 1 56 1 1 4 13 1 309 2 2 1 4 1 158 1 20 1 38"/>
<path d="M277 546.5h1125" stroke-dasharray="0 7 1 2 1 2 2 4 3 3 1 1 2 1 1 5 2 2 1 8 1 1 4 2 3 8 1 2 2 1 1 2 1 3 1 2 1 1 5 1 1 1 1 5 1 3 2 5 3 8 1 4 1 4 2 1 1 1 1 2 1 1 2 1 1 3 3 9 2 4 1 2 1 1 1 3 1 2 1 4 1 2 5 3 1 2 1 1 1 4 1 1 1 9 1 11 3 5 3 2 2 1 2 5 1 3 2 2 1 1 1 1 1 5 1 1 1 2 1 3 2 1 1 1 1 2 2 2 8 1 1 3 1 3 1 2 2 2 2 2 1 2 4 6 1 1 1 2 1 4 1 5 2 1 1 1 3 1 1 1 2 1 2 2 2 2 1 6 1 1 2 6 2 1 1 3 1 1 1 4 1 6 1 4 1 1 1 4 5 2 4 1 3 1 9 4 1 3 3 1 1 1 3 4 3 2 1 1 5 3 11 4 2 1 1 3 1 2 2 1 4 1 1 1 4 3 1 2 1 3 1 17 2 6 3 1 1 1 1 1 12 6 3 2 2 12 3 7 1 2 1 1 1 4 1 4 1 1 1 6 1 2 1 2 1 2 3 4 3 2 1 1 2 2 2 2 1 2 2 2 4 1 1 1 2 10 1 1 3 1 1 2 2 3 1 10 1 1 2 1 1 5 1 4 2 1 3 6 2 1 3 1 2 1 1 2 1 1 1 5 3 1 2 6 1 5 2 3 1 7 1 2 1 1 1 1 1 2 1 1 2 2 1 3 1 4 4 6 1 3 1 5 5 2 2 1 2 2 1 5 1 1 1 2 1 3 1 2 3 1 2 1 1 1 2 2 1 5 1 2 7 2 2 3 1 3 1 4 1 8 6 5 1 3 1 1 1 1 1 5 3 5 1 1 3 2 2 1 6 2 1 1 1 1 1 2 1 3 1 4 1 4 1 3 1 2 2 4 1 1 3 2 1 4 1 3 1 2 2 3 1 1 1 1 1 2 1 3 1 2 1 2 1 1 1 5 2 1 4 2 1 5 2 1 3 3 4 1 1 3 2 8 1 4 1 5 4 2 2 1"/>
<path d="M277 547.5h1125" stroke-dasharray="67 1 7 2 16 1 4 1 9 1 12 1 35 1 51 1 3 1 44 1 9 1 45 1 12 1 1 1 15 1 39 1 62 1 30 1 72 1 94 1 41 1 45 1 23 1 58 1 1 1 12 1 39 1 75 1 47 1 24 1 67 1 6 1 1 1 6 1 17 1"/>
<path d="M277 550.5h1125" stroke-dasharray="51 2 15 1 29 1 19 1 22 1 10 1 13 1 19 1 5 1 20 1 2 2 24 1 69 1 4 1 9 1 18 1 8 1 45 2 6 1 9 1 28 1 2 1 27 2 39 1 60 1 11 1 6 1 1 1 12 1 20 1 24 1 69 1 17 1 9 1 1 1 35 1 14 1 13 1 16 1 48 1 11 1 2 1 9 1 7 1 11 2 7 1 12 1 9 1 17 1 4 1 27 1 20 2 5 2 19 1 2 1 2 1 15 1 30 1 2 0"/>
<path d="M277 551.5h1125" stroke-dasharray="0 5 1 2 1 10 2 10 3 1 1 1 2 5 3 6 1 1 2 1 1 1 2 2 2 9 1 1 1 4 1 3 1 2 1 2 1 13 1 2 2 1 1 7 1 1 1 2 1 5 3 6 1 3 1 1 1 3 1 2 1 2 1 1 2 7 1 2 4 4 1 1 1 1 1 12 3 6 3 1 1 1 1 1 1 8 2 3 1 11 1 9 4 1 1 2 1 9 1 1 1 5 1 4 3 5 1 3 9 1 1 8 1 3 1 3 1 5 1 1 1 4 1 1 1 14 4 2 1 5 1 1 1 5 1 9 1 3 2 23 1 12 1 3 1 1 1 6 1 1 6 1 3 8 1 4 4 2 2 1 1 1 2 1 3 3 1 3 7 1 1 10 1 2 2 6 1 9 1 3 1 9 1 2 1 8 2 1 1 3 1 5 2 1 1 2 4 1 4 7 1 4 1 1 1 3 1 14 1 4 1 9 1 5 1 2 1 4 3 2 1 2 1 1 1 3 1 1 1 4 1 7 1 1 1 3 1 9 1 6 1 4 1 2 2 6 1 3 2 4 1 1 1 5 1 10 1 9 1 2 1 1 1 1 2 9 1 11 1 4 1 1 1 1 1 5 2 2 1 3 1 2 1 2 1 14 1 4 1 3 1 1 1 5 2 1 1 1 1 7 1 3 1 2 1 3 1 3 3 3 1 2 1 1 1 3 5 6 2 1 1 1 3 1 3 1 1 1 1 2 2 1 1 2 1 5 1 1 1 5 1 5 1 4 1 2 1 7 2 3 1 1 1 4 1 1 1 3 1 1 1 4 4 5 3 8 1 6 2 1 1 7 2 4 1 1 1 4 1 5 2 2 1 1 1 6 3 4 1 10 1 3 1 6 1 3 1 1 1 1 3 1 1 3 1 8 1 1 3 2 2 2 1 4 1 1 1 7"/>
<path d="M277 552.5h1125" stroke-dasharray="0 19 1 272 1 3 1 142 1 2 1 41 1 3 1 1 1 77 2 2 1 1 1 550"/>
<path d="M277 553.5h1125" stroke-dasharray="0 292 1 3 1 142 1 2 1 45 1 80 1 2 1 552"/>
<rect x="277" y="548" width="1125" height="2" fill="#00ffff" stroke="none"/>
<path d="M277 574.5h1125" stroke-dasharray="0 38 1 106 1 644 1 334"/>
<path d="M277 575.5h1125" stroke-dasharray="0 36 3 1 1 1 1 101 3 5 1 40 1 3 3 576 1 5 2 2 1 1 1 1 2 1 2 330"/>
<path d="M277 576.5h1125" stroke-dasharray="0 2 2 4 2 6 1 1 1 2 1 4 1 1 1 1 1 2 2 1 3 1 1 1 5 3 1 9 1 9 1 6 1 7 1 1 1 2 1 37 1 7 1 2 1 2 7 2 2 6 1 5 1 4 1 2 2 15 1 2 2 2 3 5 1 2 2 3 1 4 1 2 1 6 1 7 1 3 2 7 1 3 1 11 1 1 1 3 2 13 1 3 2 2 1 1 1 10 1 1 1 10 1 1 1 1 1 9 1 1 1 6 2 8 1 7 1 6 1 6 1 19 1 2 1 10 1 4 3 12 1 2 1 3 1 3 1 10 1 4 1 14 1 21 1 6 2 13 2 12 1 13 1 9 1 5 2 5 1 15 1 9 2 12 1 3 1 14 1 3 2 1 1 2 1 18 1 2 1 2 3 6 1 8 1 5 1 3 1 1 1 21 1 3 1 2 1 6 2 1 1 4 1 3 2 2 1 1 3 5 1 2 1 14 1 5 5 1 5 1 7 6 1 1 1 9 1 1 1 5 1 5 1 9 1 2 1 1 1 10 1 1 1 19 1 5 1 3 1 1 1 6 1 2 2 2 1 3 1 13 1 2 1 3 1 2 1 3 1 4 1 3 1 14 1 2 1 3 3 4 2 3 2 2 2 1 1 1 2 4 1 17 1 4 2 11 2 5 1 14 1 16 1 3 1 2 1 3 1 2 2 13 1 5 2 1 1 14 1 5"/>
<path d="M277 577.5h1125" stroke-dasharray="1 1 15 1 2 1 3 1 48 1 18 1 30 1 17 1 24 1 1 1 19 2 2 1 17 1 8 1 7 1 9 2 4 1 15 1 3 1 9 1 4 2 3 1 16 1 30 1 1 1 3 1 3 2 3 1 2 1 7 1 19 1 5 1 8 1 14 2 11 1 5 1 6 2 14 1 27 1 6 1 2 1 10 1 8 1 13 1 11 1 2 1 24 1 1 1 3 4 7 1 19 1 6 1 1 1 7 1 2 1 12 1 2 1 5 1 9 1 13 2 9 1 1 1 1 2 1 1 2 2 14 1 7 1 7 1 3 1 2 1 7 1 3 1 4 1 6 1 4 1 9 1 1 1 33 2 6 1 2 1 6 1 2 1 23 1 2 1 6 1 14 1 2 1 11 1 10 1 4 1 8 1 30 1 53 1 2 1 7 1 6 1 19 2 3 2 4 1 39 1 1 1 14 1 9 1 11 1 2 0"/>
<path d="M277 580.5h1125" stroke-dasharray="163 1 44 1 159 1 140 1 120 1 10 1 29 1 169 1 23 1 259 0"/>
<path d="M277 581.5h1125" stroke-dasharray="0 1 2 5 2 1 1 5 1 1 4 3 2 2 1 2 12 1 1 1 5 3 1 2 1 1 5 1 3 1 3 3 1 2 1 1 3 3 3 3 4 1 1 3 2 6 1 1 5 1 1 1 3 3 1 1 1 1 1 2 1 1 4 1 3 2 1 2 2 1 1 1 2 1 1 1 1 1 1 4 1 1 1 2 2 1 1 1 4 1 1 2 2 2 1 5 7 4 1 1 1 2 2 2 1 1 7 4 2 1 1 1 2 2 2 1 2 1 1 2 2 3 2 1 1 2 2 5 4 3 1 1 2 4 2 1 6 2 2 1 1 3 3 1 1 1 2 1 2 1 1 1 1 3 8 1 5 1 1 2 2 3 10 1 3 2 1 2 2 2 1 1 1 2 1 3 4 4 2 1 1 1 3 2 3 1 2 1 1 2 1 2 1 3 3 1 2 2 3 2 2 2 1 2 1 1 1 4 1 1 2 3 2 2 1 1 5 2 1 1 3 1 2 3 1 3 1 3 1 2 3 1 2 5 2 1 1 4 1 3 1 4 1 4 3 1 2 3 2 1 2 3 1 2 3 1 2 2 1 1 2 1 1 3 1 4 1 2 1 9 1 1 1 5 2 2 2 2 2 1 1 1 3 1 1 6 1 1 1 2 3 2 1 1 3 6 2 1 1 1 2 4 1 1 3 1 2 1 1 2 1 1 2 2 1 5 1 1 1 3 1 3 7 1 1 1 1 3 1 2 4 1 3 1 1 1 1 2 1 1 2 2 4 3 4 5 4 2 3 5 1 2 3 1 1 7 5 2 1 3 1 1 1 1 1 1 2 3 1 1 2 1 1 2 1 3 7 1 13 1 1 1 1 4 1 4 2 1 4 4 2 2 2 1 2 2 2 2 2 1 3 2 1 1 2 1 1 1 1 3 2 1 7 2 1 3 1 1 2 4 1 3 1 1 1 2 2 4 1 1 3 5 1 1 1 8 4 2 1 4 2 3 1 6 2 1 5 1 2 1 4 1 3 3 3 2 1 1 2 1 1 2 1 2 2 1 3 3 1 5 1 1 1 2 2 1 1 2 1 3 3 1 2 1 1 3 2 1 1 2 1 2 2 1 1 1 6 1 7 2 1 1 2 1 1 1 4 5 1 4 2 1 1 2 3 1 4 2 1 4 2 1 4 1 1 2 1 3 1 3 1 3 3 3 4 1 2 0"/>
<path d="M277 582.5h1125" stroke-dasharray="0 36 8 98 1 3 1 3 1 44 6 56 1 155 1 10 1 174 1 3 1 1 1 13 1 146 1 9 2 3 1 1 1 1 1 1 5 47 1 14 1 8 1 240 1 16 1 3"/>
<path d="M277 583.5h1125" stroke-dasharray="0 37 1 1 2 154 3 585 1 1 1 1 1 1 3 333"/>
<path d="M277 584.5h1125" stroke-dasharray="0 787 1 1 1 1 1 333"/>
<rect x="277" y="578" width="1125" height="2" fill="#00ffff" stroke="none"/>
<path d="M277 605.5h1125" stroke-dasharray="0 181 2 2 1 107 1 1 2 828"/>
<path d="M277 606.5h1125" stroke-dasharray="0 12 2 9 1 37 1 62 1 10 1 31 1 11 5 1 1 3 1 17 1 12 1 4 1 65 3 1 3 21 1 31 1 28 1 19 1 3 1 33 2 2 1 16 1 13 1 38 1 22 1 7 1 20 1 9 1 4 1 3 1 27 2 9 1 3 1 32 1 14 1 8 1 1 1 1 1 2 1 8 1 46 1 43 1 7 1 31 1 22 1 10 1 20 1 73 1 1 1 26 1 27 1 5 1 2 1 2 1 3 1 38 1 14 1 16 1 18 1 2"/>
<path d="M277 607.5h1125" stroke-dasharray="3 1 4 1 11 1 3 2 7 2 4 2 3 1 1 1 1 3 2 2 3 1 3 3 2 2 5 1 5 2 2 1 3 1 2 1 1 2 2 2 1 2 6 1 1 4 1 1 3 2 4 1 2 2 1 1 1 2 7 1 2 1 1 1 1 1 3 2 1 1 14 1 12 1 3 1 2 1 1 1 1 1 2 1 5 1 4 2 5 2 3 1 2 1 4 1 3 1 2 2 2 1 3 1 6 1 3 1 3 1 1 1 2 2 1 1 6 1 2 1 6 1 2 1 11 2 6 1 2 1 12 1 6 2 3 2 1 1 4 3 2 1 1 1 4 2 7 2 1 2 2 1 6 1 2 1 3 1 4 1 5 1 5 1 2 1 3 1 1 1 1 1 3 1 1 2 1 2 1 1 1 3 1 3 2 1 6 1 1 1 5 1 2 2 4 1 4 1 2 2 1 1 2 1 1 1 14 1 1 1 1 1 4 1 3 1 2 1 2 1 2 1 2 2 9 5 2 1 1 1 4 1 4 1 3 1 3 2 1 2 2 1 1 1 1 1 5 2 3 1 1 1 1 2 2 1 4 1 1 1 2 1 1 2 4 1 3 1 2 1 4 1 6 1 1 1 1 1 2 1 4 1 9 2 5 1 5 2 3 2 5 2 6 1 5 1 6 1 2 1 2 1 1 1 7 1 4 3 6 1 5 1 9 1 5 2 4 2 2 1 6 1 1 1 1 1 4 1 5 1 10 2 1 1 1 1 1 2 11 1 1 1 4 1 1 1 2 1 4 2 3 1 1 2 1 2 1 2 1 1 1 1 1 1 2 1 3 1 9 1 6 1 2 2 1 1 9 1 1 1 3 3 1 3 7 3 2 1 3 2 1 1 1 1 1 1 1 1 2 1 7 1 2 1 2 1 3 1 3 1 2 2 9 1 1 1 2 1 6 1 9 1 3 1 1 1 3 3 3 1 1 4 3 1 6 1 1 1 12 1 7 1 3 3 1 4 2 1 3 1 1 1 3 1 14 1 3 1 2 1 6 1 3 1 12 1 2 1 2 1 5 1 6 1"/>
<path d="M277 608.5h1125" stroke-dasharray="530 1 416 1 177 0"/>
<path d="M277 611.5h1125" stroke-dasharray="0 1 1 4 13 3 1 2 10 1 1 1 2 1 7 1 3 1 3 1 5 2 1 1 2 1 5 1 2 2 8 1 6 1 1 1 2 2 8 3 9 2 1 1 2 3 1 1 3 1 9 1 1 1 6 3 6 2 5 2 2 2 2 1 9 2 2 1 1 1 2 1 5 1 1 1 9 1 2 1 8 2 10 1 4 1 1 2 5 1 2 1 3 1 1 1 4 2 2 1 3 2 3 1 1 1 5 1 5 1 7 1 3 1 15 3 1 2 3 1 6 1 5 1 3 1 3 2 1 1 2 1 1 1 3 1 18 1 1 1 4 1 4 1 1 1 10 1 2 1 8 1 3 1 4 1 1 1 6 4 1 2 5 1 6 3 3 1 12 1 2 1 10 2 7 2 2 1 1 1 1 1 1 1 8 1 1 1 1 1 1 1 7 1 2 2 6 1 8 1 1 1 1 1 3 1 1 1 2 1 4 2 4 1 14 2 15 1 4 1 4 2 11 1 1 1 3 1 8 1 1 1 1 2 6 1 9 1 3 1 1 1 17 1 7 1 1 1 1 1 3 1 3 2 3 1 1 1 1 1 1 1 1 1 23 1 5 1 12 1 3 2 2 1 1 2 2 1 1 1 2 1 2 1 2 1 4 2 5 2 4 1 3 1 3 1 5 1 2 2 1 2 1 1 1 1 9 1 2 1 3 1 3 1 1 1 8 1 3 1 2 1 1 1 8 1 3 3 1 1 4 2 1 1 5 1 1 1 16 1 7 2 6 1 1 2 1 1 4 2 1 1 3 1 4 1 2 2 2 2 3 1 10 1 2 3 1 1 6 1 2 1 2 1 7 2 3 4 2 1 4 1 1 1 6 1 3 2 4 1 4 1 3 1 20 1 2 1 2 1 5 1 5 1 5 3 4 1 5 1 3 1 1 1"/>
<path d="M277 612.5h1125" stroke-dasharray="0 69 1 18 1 4 1 22 2 15 1 14 1 8 1 9 1 11 3 1 3 10 1 2 1 19 1 1 1 20 2 37 1 7 1 2 1 2 1 1 1 10 1 9 1 6 1 8 1 2 1 55 1 15 1 11 2 52 1 9 1 6 1 20 1 13 1 10 1 2 1 45 1 5 1 7 1 9 1 3 1 11 1 14 1 35 1 17 2 41 1 2 1 3 1 3 1 2 1 38 1 2 1 11 1 9 1 17 1 8 1 17 1 2 1 22 1 8 1 3 1 14 1 9 1 11 1 16 1 14 1 5 1 35 1 2 1 10 1 23 1 53 1 15 1 4"/>
<path d="M277 613.5h1125" stroke-dasharray="0 181 1 2 1 107 1 2 1 829"/>
<rect x="277" y="609" width="1125" height="2" fill="#00ffff" stroke="none"/>
<path d="M277 636.5h1125" stroke-dasharray="0 290 1 323 1 4 1 122 1 187 1 14 1 101 1 77"/>
<path d="M277 637.5h1125" stroke-dasharray="2 1 1 2 1 1 1 1 1 4 4 2 1 3 1 2 2 6 1 2 2 1 2 2 3 1 3 1 1 2 1 1 1 1 1 1 1 1 1 3 3 3 5 1 2 1 4 1 1 2 1 1 1 1 1 1 1 3 4 5 1 3 1 1 3 1 2 1 3 1 2 1 1 3 1 4 1 4 1 2 1 1 1 1 1 2 1 3 1 1 1 1 1 2 1 2 1 7 3 2 1 3 5 5 2 1 1 5 1 1 5 2 8 1 1 1 2 3 1 7 1 2 3 2 1 2 6 2 1 1 1 6 1 1 1 1 1 1 1 1 6 1 4 1 1 3 1 1 2 1 1 3 1 3 1 2 1 3 2 1 2 1 2 4 1 1 1 4 1 2 1 2 2 1 2 2 2 1 2 3 4 3 2 1 1 2 2 1 1 1 1 4 3 2 2 2 4 1 1 2 2 1 2 1 1 2 2 1 1 1 1 2 1 2 2 1 1 2 3 1 1 6 2 1 1 11 3 9 1 4 2 1 1 2 1 1 1 2 4 6 1 1 1 2 1 1 1 2 4 4 1 4 1 2 3 2 1 3 1 2 1 3 1 2 2 2 4 6 2 1 1 1 2 1 1 10 1 6 1 1 2 1 1 4 6 1 1 3 3 1 1 1 1 1 3 2 1 1 2 5 1 1 2 2 1 1 2 1 1 1 3 1 2 3 1 1 1 2 2 5 1 1 1 3 1 1 3 3 2 5 1 5 4 1 3 1 1 3 3 5 1 2 1 2 2 2 1 1 1 2 2 3 1 1 1 5 2 1 1 2 2 5 1 4 1 3 1 1 2 4 2 6 2 5 6 7 2 3 3 1 3 2 3 5 1 2 1 1 6 2 1 1 1 2 2 1 1 3 3 2 1 1 1 3 2 2 2 3 2 1 1 2 5 1 5 2 2 2 1 1 1 1 2 1 1 1 3 6 1 1 2 1 1 1 2 1 2 8 2 1 1 2 2 1 2 3 3 3 5 1 1 1 1 2 4 1 2 1 6 2 1 1 1 2 2 1 1 1 1 5 1 1 1 1 1 2 1 1 2 1 1 1 2 3 2 1 3 1 2 1 2 6 1 1 6 1 1 1 2 5 2 2 1 2 2 3 4 1 1 3 1 3 1 2 1 3 1 5 3 2 2 1 1 2 1 4 2 10 1 4 2 1 1 1 2 1 1 1 3 1 5 2 1 1 2 3 1 3"/>
<path d="M277 638.5h1125" stroke-dasharray="31 1 23 1 53 1 66 1 3 1 10 1 145 1 159 1 26 1 47 1 1 1 23 1 29 1 5 1 2 1 21 1 17 1 66 1 2 1 78 1 2 1 37 1 4 1 252 0"/>
<path d="M277 641.5h1125" stroke-dasharray="4 1 5 1 1 1 8 1 15 1 9 1 6 2 4 1 9 1 7 2 9 3 5 1 2 1 16 1 3 1 4 1 8 1 1 1 6 1 7 1 9 1 18 1 23 1 5 1 29 2 15 1 12 1 29 1 9 1 16 1 15 1 17 1 3 1 12 1 9 1 2 1 6 1 12 1 17 1 13 1 9 1 22 1 1 1 33 1 4 1 5 2 21 1 18 1 2 1 23 1 24 1 3 1 3 1 21 1 10 1 17 1 2 1 1 1 4 1 3 1 3 1 18 1 21 1 8 1 17 1 12 1 8 2 19 2 4 1 8 1 31 1 10 1 3 1 32 2 26 1 27 1 26 1 4 1 27 1 13 1 20 1 4 1 4 1 16 1 6 1 3 1 34 0"/>
<path d="M277 642.5h1125" stroke-dasharray="2 5 1 9 1 1 1 6 1 3 1 10 1 4 1 1 1 1 3 5 2 4 1 1 1 14 1 3 1 2 1 7 1 4 1 3 1 1 1 2 1 4 1 4 1 1 1 1 1 3 2 2 1 5 2 2 1 4 1 5 1 2 1 3 1 7 1 4 1 2 1 12 3 5 1 10 1 11 1 3 1 2 2 8 1 5 1 8 3 7 1 14 2 2 1 7 1 2 1 20 1 7 1 3 1 10 1 13 2 4 1 10 1 1 1 1 1 3 2 1 1 2 1 9 1 28 1 11 1 1 1 2 1 2 1 2 1 1 1 1 1 3 1 1 1 1 1 1 1 8 1 1 1 1 1 7 1 1 1 1 1 5 1 6 1 2 1 6 2 7 3 2 1 10 1 9 2 3 2 5 1 1 1 1 1 2 1 5 1 2 1 5 1 3 2 6 1 5 1 12 2 1 1 3 1 8 1 8 1 4 1 10 1 9 1 3 1 1 3 1 1 2 1 6 1 2 1 5 2 2 2 1 1 1 1 9 2 2 1 2 1 13 3 6 1 5 2 1 1 2 1 2 1 7 1 1 2 4 1 2 1 1 1 1 1 8 1 5 1 1 2 3 1 2 1 3 1 20 2 9 1 7 1 18 3 2 2 3 2 7 1 2 1 12 1 4 1 6 1 2 2 6 1 1 2 1 1 3 2 5 2 7 1 6 2 10 1 2 1 14 1 6 1 7 1 1 1 3 1 2 3 15 1 1 1 9 1 7 1 1 1 6 1 4 1 6 1 2 1 2 2 3 1 13 2 7 1 5 1 4 1 1 1 4 1 9"/>
<rect x="277" y="639" width="1125" height="2" fill="#00ffff" stroke="none"/>
<path d="M277 665.5h1125" stroke-dasharray="0 1109 3 1 1 3 1 7"/>
<path d="M277 666.5h1125" stroke-dasharray="0 542 1 398 1 163 2 1 6 1 3 2 1 4"/>
<path d="M277 667.5h1125" stroke-dasharray="1 7 1 9 1 2 1 3 1 9 1 1 1 3 1 2 1 4 1 4 1 1 1 2 1 1 1 1 1 2 1 8 1 1 1 4 1 2 1 5 2 18 1 7 1 13 1 5 1 1 1 7 1 1 1 8 1 3 1 11 1 5 1 23 1 2 1 7 1 8 2 8 2 4 1 6 2 1 1 3 1 14 1 9 2 7 1 2 1 10 1 1 2 1 1 4 1 3 1 3 1 1 2 2 1 2 1 9 1 10 1 1 1 3 1 16 1 1 1 3 1 4 1 4 1 7 1 6 1 2 1 4 1 3 1 3 2 1 1 4 1 2 1 2 1 9 1 5 1 2 1 4 2 11 1 2 1 4 1 4 1 1 1 3 1 2 1 2 1 2 1 1 2 4 1 18 1 5 1 1 1 5 1 2 1 1 1 2 2 2 2 13 1 7 1 3 1 14 1 1 1 2 1 13 1 13 1 6 1 17 2 12 1 9 1 5 1 7 1 2 1 7 1 1 1 1 2 4 1 19 3 11 1 2 2 3 1 1 1 8 1 1 1 2 1 1 1 4 1 4 1 3 1 1 1 5 1 12 1 2 4 8 1 5 1 2 1 2 1 6 2 4 1 5 1 3 1 4 1 3 1 3 1 9 1 4 1 7 1 1 1 10 1 9 1 1 2 10 1 1 3 4 2 4 1 5 1 2 1 1 1 2 1 1 1 2 1 15 1 3 1 15 1 2 1 15 2 2 1 3 1 1 1 11 1 1 1 1 1 5 1 1 2 7 1 4 1 1 1 5 1 2 1 3 1 3 3 3 1 6 1 3 19 2"/>
<path d="M277 668.5h1125" stroke-dasharray="7 1 15 1 21 1 12 1 5 1 13 1 14 1 15 1 3 1 2 1 21 1 3 1 9 1 8 2 18 1 1 1 5 1 1 1 5 2 3 1 11 1 24 1 5 1 41 1 44 1 14 1 17 3 27 1 4 1 15 1 7 1 15 1 1 1 1 1 3 1 14 1 1 1 5 1 10 2 12 1 27 1 2 1 4 1 5 1 9 1 42 1 7 1 28 1 1 2 6 1 2 1 2 1 34 1 1 1 5 1 8 1 1 1 5 1 4 1 11 1 3 1 4 2 7 1 20 1 16 1 10 1 4 2 27 1 11 1 27 1 3 1 1 1 1 1 2 2 5 1 21 1 15 1 4 2 2 1 2 1 8 1 2 2 3 1 26 2 1 1 17 2 1 1 27 1 13 1 10 1 25 1 21 1 25 0"/>
<path d="M277 669.5h1125" stroke-dasharray="709 1 415 0"/>
<path d="M277 671.5h1125" stroke-dasharray="16 1 69 2 65 1 7 1 58 1 23 1 3 1 109 1 25 1 29 1 26 1 27 1 7 1 8 1 6 1 16 1 21 1 109 1 17 1 53 1 12 1 203 1 18 1 94 1 6 1 42 1 29 0"/>
<path d="M277 672.5h1125" stroke-dasharray="0 1 1 2 1 1 1 1 2 1 2 6 1 1 2 9 3 3 2 1 1 1 2 1 2 1 1 1 2 1 1 2 1 1 1 1 2 3 1 1 1 3 1 1 1 1 1 5 1 1 1 7 1 1 1 2 4 1 4 1 1 4 1 3 4 1 4 1 1 1 1 2 1 1 2 2 2 1 2 3 1 2 2 4 1 5 1 1 3 2 1 4 2 1 3 1 1 1 2 4 1 1 1 2 2 1 1 5 4 1 2 4 1 2 1 7 2 3 1 3 1 1 3 2 1 1 1 1 1 1 2 3 1 1 1 1 1 1 2 3 2 1 1 2 1 1 1 1 1 1 1 10 3 5 1 4 1 1 1 3 1 4 4 4 1 6 1 3 1 3 1 2 1 1 1 1 4 3 1 1 1 4 1 4 1 2 1 3 3 4 2 2 1 5 2 2 2 1 3 3 2 1 1 1 2 2 1 1 3 2 1 2 1 1 1 11 1 1 2 2 1 2 1 5 1 1 3 2 1 1 1 1 6 1 1 2 1 1 3 4 1 1 2 2 2 5 1 1 1 1 1 1 1 2 1 2 1 3 6 1 2 1 1 1 1 4 2 1 1 1 1 3 1 1 2 2 1 2 1 5 1 2 2 1 1 5 2 6 2 2 1 5 3 1 3 1 1 1 1 1 1 2 1 6 1 1 1 1 1 2 1 3 1 1 2 3 1 1 1 2 1 1 1 2 2 1 3 5 1 1 3 3 1 3 1 2 1 1 2 1 5 3 3 1 1 6 1 3 1 1 5 2 1 3 2 1 2 3 3 1 2 3 1 1 2 1 1 1 1 1 1 1 1 7 2 3 1 7 1 1 4 2 1 1 1 7 3 2 1 1 1 2 1 4 1 1 2 1 2 2 1 1 3 2 2 3 1 5 1 3 1 3 2 4 1 1 1 1 1 3 2 2 1 9 2 6 1 3 3 2 1 2 1 1 4 1 1 2 1 2 1 1 2 4 4 1 1 3 1 3 2 2 2 4 1 4 1 2 1 2 1 1 1 4 4 3 1 2 1 1 3 1 2 3 5 3 2 1 1 2 5 4 1 1 1 1 5 1 1 1 1 7 2 4 1 3 2 1 2 3 1 1 1 2 1 1 1 1 1 1 4 3 2 1 1 1 1 1 1 1 1 6 2 2 1 1 3 2 1 2 2 1 3 1 3 3 1 5 1 4 1 1 5 2 1 3 1 2 3 2 1 1 2 4 3 1 7 1 3 1 6 1 1 2"/>
<path d="M277 673.5h1125" stroke-dasharray="0 112 1 123 1 441 1 51 1 27 1 244 1 42 1 56 1 3 2 2 1 1 1 1 2 2 2 4"/>
<path d="M277 674.5h1125" stroke-dasharray="0 1108 1 16"/>
<rect x="277" y="670" width="1125" height="1" fill="#00ffff" stroke="none"/>
<path d="M277 695.5h1125" stroke-dasharray="0 101 1 3 2 1018"/>
<path d="M277 696.5h1125" stroke-dasharray="0 101 1 2 3 568 1 67 1 1 1 379"/>
<path d="M277 697.5h1125" stroke-dasharray="0 4 1 6 1 6 1 2 1 25 1 21 1 30 2 1 6 6 1 12 1 4 1 16 1 1 1 5 1 3 1 25 1 4 1 2 2 1 1 5 1 2 1 22 1 11 1 12 1 32 1 2 1 8 1 9 1 6 1 13 1 12 1 1 2 30 1 1 1 5 1 3 1 12 1 22 1 2 1 4 2 16 1 3 1 39 1 8 1 6 1 3 1 2 1 33 1 9 1 3 1 18 1 1 2 2 1 12 1 9 1 54 7 1 2 2 1 1 1 16 1 30 1 3 1 5 1 1 2 1 1 4 1 11 1 16 1 22 1 8 2 1 1 43 1 28 1 58 2 11 1 5 1 79 1 6 1 26 1 42"/>
<path d="M277 698.5h1125" stroke-dasharray="5 1 3 2 15 3 1 1 2 1 1 1 1 1 11 1 2 1 2 2 2 3 1 1 7 2 8 1 5 1 3 1 1 1 2 2 11 2 2 1 2 1 3 1 4 1 13 1 6 2 5 1 1 1 1 1 9 1 5 1 2 1 1 1 8 1 12 1 3 1 5 1 1 1 1 1 1 2 3 1 10 1 1 1 3 1 5 1 16 1 1 2 4 1 8 1 9 1 7 1 2 1 4 1 3 2 3 1 1 1 7 3 1 1 1 2 18 1 1 1 3 2 1 1 2 1 1 1 1 1 22 1 6 1 6 1 2 1 4 1 3 1 6 1 6 1 3 1 4 1 3 1 4 1 4 1 7 1 1 2 1 1 3 1 1 3 4 1 4 2 3 1 2 1 2 1 2 1 3 2 3 1 1 1 2 2 4 1 1 2 1 1 7 1 5 1 6 2 2 3 2 1 3 5 9 1 4 1 6 1 2 1 10 1 7 1 6 1 3 1 8 3 5 2 3 1 1 1 1 2 4 2 8 1 3 2 6 1 13 1 6 1 3 1 2 1 6 1 3 1 5 1 11 1 1 2 5 1 1 1 13 1 9 1 6 1 2 1 3 2 2 2 1 1 1 1 4 1 12 2 5 2 1 1 1 1 2 1 9 2 5 1 4 1 10 1 2 1 13 1 11 1 4 1 7 1 3 2 8 1 2 2 2 2 2 1 11 2 1 1 1 1 1 1 3 1 2 1 2 1 14 1 2 1 6 1 2 1 8 2 6 1 10 1 4 1 5 4 3 2 2 1 2 3 4 1 8 1 4 1 2 1 2 1 6 1 1 1 2 1 3 1 6 4 12 2 3 1 3 1 3 1 1 2 2 1 3 1 1 1 7 0"/>
<path d="M277 699.5h1125" stroke-dasharray="304 1 50 1 173 1 84 1 510 0"/>
<path d="M277 701.5h1125" stroke-dasharray="22 1 14 1 119 1 447 1 475 1 43 0"/>
<path d="M277 702.5h1125" stroke-dasharray="0 2 3 1 3 1 2 3 4 2 1 1 4 1 2 1 5 2 4 1 4 1 3 1 2 1 4 2 3 1 5 1 7 4 2 1 1 3 4 1 16 2 1 2 5 1 1 1 3 1 1 1 4 1 2 1 1 1 2 1 3 1 3 1 5 3 10 1 1 2 4 7 3 2 6 1 1 1 2 1 2 3 1 2 10 4 2 2 3 1 1 2 7 1 1 2 7 1 1 1 1 2 2 3 1 1 3 1 2 1 3 4 2 2 1 1 5 3 9 1 3 2 5 1 1 1 3 1 1 1 6 1 8 1 3 1 3 2 2 1 1 1 2 1 8 1 11 1 1 1 1 2 2 1 2 3 3 1 3 1 1 4 5 2 4 1 3 1 1 3 2 2 7 2 5 1 1 1 8 1 2 2 2 1 1 1 3 1 1 1 4 2 3 1 2 1 7 1 2 1 1 2 1 2 8 5 4 1 2 2 5 1 2 2 2 1 4 1 3 1 3 1 6 1 3 1 2 1 1 1 2 2 3 2 1 1 5 1 3 2 3 2 6 1 1 5 1 2 2 1 4 2 5 2 7 1 9 1 2 1 1 2 2 1 4 1 1 1 1 1 1 1 8 2 16 1 1 1 4 1 4 1 1 1 2 2 6 1 1 1 3 2 13 1 8 3 5 1 4 1 1 1 1 1 2 1 7 1 12 1 5 1 3 1 1 1 1 1 5 1 1 3 1 1 7 1 1 1 2 1 1 3 16 2 7 1 4 1 2 1 3 1 9 2 1 2 3 1 1 2 1 1 1 2 1 1 4 1 2 1 3 1 1 1 3 2 3 1 2 1 1 1 2 1 1 2 6 1 3 1 2 1 4 1 1 2 4 1 1 2 5 2 1 1 3 2 5 1 6 1 1 1 5 1 1 1 1 1 1 2 6 1 1 1 1 2 3 2 1 2 10 1 2 1 4 2 5 1 3 2 4 1 4 1 1 1 5 2 4 1 2 1 3 1 3 2 3 1 4 1 2 1 1 1 1 1 2 1 1 1 1 2 15 1 3 0"/>
<path d="M277 703.5h1125" stroke-dasharray="0 8 1 22 1 11 1 27 1 11 1 16 2 1 5 90 1 40 1 71 1 27 1 3 1 45 1 23 1 3 1 11 1 66 1 37 1 1 1 11 1 41 1 13 1 2 1 55 1 4 1 3 1 1 3 1 4 21 2 14 1 14 1 7 4 1 2 21 1 21 1 23 1 107 1 60 1 34 1 77 1 26"/>
<path d="M277 704.5h1125" stroke-dasharray="0 103 1 2 1 565 1 2 2 2 1 63 1 3 1 377"/>
<path d="M277 705.5h1125" stroke-dasharray="0 679 1 445"/>
<rect x="277" y="700" width="1125" height="1" fill="#00ffff" stroke="none"/>
<path d="M277 725.5h1125" stroke-dasharray="0 325 1 799"/>
<path d="M277 726.5h1125" stroke-dasharray="0 283 1 2 1 35 2 1 2 184 1 1 1 1 1 1 1 516 2 89"/>
<path d="M277 727.5h1125" stroke-dasharray="0 9 1 44 1 60 1 7 1 158 2 2 1 18 1 14 7 1 1 6 1 24 1 6 1 2 1 1 1 22 1 113 7 1 1 48 1 43 1 122 1 104 1 113 1 12 1 66 4 1 1 21 1 13 1 51"/>
<path d="M277 728.5h1125" stroke-dasharray="1 6 3 2 2 5 2 1 1 2 1 2 1 1 1 1 6 2 1 3 11 3 1 1 1 1 1 2 2 3 1 1 2 1 1 1 2 1 4 2 1 1 3 1 4 5 4 4 1 1 1 2 5 3 3 1 1 2 2 1 1 3 4 2 1 3 5 1 1 2 1 1 1 1 1 2 1 1 1 4 1 2 1 2 2 1 3 1 1 1 2 3 2 3 2 2 2 3 4 2 1 1 1 1 1 1 1 3 2 1 1 1 1 3 4 2 1 3 2 1 2 1 2 1 1 3 1 3 1 3 2 3 1 1 1 1 2 1 2 1 1 1 2 2 8 1 1 1 1 4 1 2 2 3 2 8 2 1 13 5 2 3 2 1 1 1 3 1 3 3 1 3 2 1 7 1 6 2 1 1 5 1 1 1 2 1 8 1 1 1 1 3 4 1 2 2 2 1 1 1 1 1 1 1 2 1 4 5 1 1 2 1 1 3 2 2 2 3 3 2 1 4 1 3 3 1 2 3 5 1 1 2 1 2 2 1 6 1 2 3 1 1 14 1 1 1 1 3 3 1 1 2 1 1 1 1 1 1 1 1 3 3 1 1 4 1 1 2 1 3 1 3 4 1 2 1 1 1 1 2 1 1 2 1 1 2 2 1 2 1 1 1 1 1 7 3 1 2 1 4 1 2 1 1 2 2 1 1 7 1 1 1 1 1 1 1 8 2 4 1 1 2 1 1 1 1 2 4 1 2 1 1 2 2 1 2 1 1 1 1 2 2 1 1 2 4 6 1 1 4 1 1 5 1 3 1 1 1 2 2 1 1 2 2 3 1 2 4 2 4 2 3 1 1 1 1 4 1 2 3 2 2 1 1 2 1 2 1 6 1 3 3 1 3 4 2 3 4 2 1 1 1 1 4 2 4 6 1 1 2 2 1 1 4 2 1 1 3 1 2 1 1 1 2 4 2 1 1 2 3 1 1 3 5 6 1 1 1 2 1 4 1 5 2 2 1 3 1 1 1 1 1 1 2 2 1 1 5 2 1 1 2 1 2 2 2 4 1 3 1 1 1 1 1 1 4 2 1 5 1 2 3 2 1 1 1 1 2 4 4 2 1 2 1 2 1 1 2 2 1 2 4 1 2 2 3 1 5 2 2 1 1 1 1 8 4 1 5 1 5 2 1 2 4 2 2 1 3 1 3 1 1 1 1 1 2 5 1 2 1 1 1 1 2 3 7 1 1 1 4 1 2 3 1 2 1"/>
<path d="M277 729.5h1125" stroke-dasharray="15 1 45 1 14 1 35 1 104 1 355 1 248 1 53 1 90 1 48 1 108 0"/>
<path d="M277 731.5h1125" stroke-dasharray="262 1 507 1 84 1 269 0"/>
<path d="M277 732.5h1125" stroke-dasharray="31 1 8 1 5 1 14 1 1 1 15 1 2 1 1 1 21 1 7 1 8 2 4 1 7 1 15 1 4 1 12 1 6 1 10 1 1 1 1 1 6 1 1 1 4 1 5 1 4 1 2 1 3 1 1 1 5 1 25 2 1 1 2 2 40 1 7 1 16 1 19 3 9 1 15 1 2 2 3 1 6 1 4 1 1 1 3 1 6 1 7 1 11 1 20 1 10 1 2 1 9 1 27 1 22 1 9 1 5 1 5 1 41 1 48 1 16 1 7 1 3 1 11 1 3 1 7 1 13 1 1 1 31 1 6 1 2 1 1 2 2 1 5 1 4 1 2 1 23 1 13 1 27 1 6 1 4 1 3 1 4 2 5 1 4 1 3 1 10 2 14 1 45 2 4 1 18 2 1 2 10 1 1 1 2 1 5 1 13 2 6 1 45 1 1 1 10 1 6 1 1 1 14 1 3 1 15 0"/>
<path d="M277 733.5h1125" stroke-dasharray="0 6 1 5 1 1 1 1 1 4 1 4 1 1 1 13 1 1 2 16 1 2 1 4 1 1 1 7 1 5 3 15 1 7 1 7 1 13 1 4 1 4 2 1 1 3 1 4 1 6 1 9 1 7 1 8 1 10 1 3 1 2 1 1 1 6 1 20 2 8 1 9 1 2 1 8 2 10 1 1 4 4 1 11 1 8 1 4 6 1 2 1 1 6 1 2 1 6 1 11 1 1 1 1 1 4 7 1 1 4 1 5 1 1 1 15 1 7 1 11 1 12 1 4 1 1 1 8 2 4 1 1 1 6 1 2 1 2 1 2 1 2 1 1 1 4 1 5 1 6 2 4 1 1 5 1 6 1 1 14 1 2 1 10 2 5 1 1 1 10 2 5 1 13 1 10 1 1 3 4 1 1 1 3 1 4 1 1 1 2 1 3 1 5 2 7 1 9 1 6 1 13 1 2 1 5 2 3 1 25 1 27 1 4 1 1 1 5 1 18 1 4 1 13 1 7 1 1 1 4 1 10 2 1 1 7 1 1 1 10 1 4 1 7 1 3 1 1 2 8 1 16 1 15 1 2 1 7 1 7 1 5 1 23 1 19 1 6 1 4 1 6 1 1 1 6 2 1 1 1 1 8 1 2 1 2 1 7 8 2 1 8 1 4 1 2 1 9 1 5 1 9 2 8 1 1 1 3 1 1 1 2 1 11 1 6"/>
<path d="M277 734.5h1125" stroke-dasharray="0 285 2 32 1 1 3 1 2 42 1 15 1 124 2 1 4 519 2 87"/>
<path d="M277 735.5h1125" stroke-dasharray="0 321 1 4 1 187 1 610"/>
<rect x="277" y="730" width="1125" height="1" fill="#00ffff" stroke="none"/>
<path d="M277 756.5h1125" stroke-dasharray="0 344 1 219 1 560"/>
<path d="M277 757.5h1125" stroke-dasharray="0 344 1 219 4 1 2 278 1 175 1 99"/>
<path d="M277 758.5h1125" stroke-dasharray="0 3 1 2 2 3 1 6 2 2 3 1 2 1 3 4 1 3 1 2 1 15 1 13 1 2 1 1 2 1 2 6 1 29 1 8 2 1 1 5 1 1 3 6 1 4 1 2 1 3 1 1 1 2 1 2 1 3 2 6 1 1 2 1 2 1 1 5 1 1 2 1 1 11 1 1 2 3 1 2 3 3 1 9 1 1 1 1 2 1 1 1 2 12 2 4 1 2 1 2 1 5 1 1 1 6 1 1 1 11 1 5 1 13 1 11 3 1 1 1 1 3 3 1 1 5 2 1 1 6 1 1 1 10 1 2 1 5 1 16 2 2 2 3 1 3 2 2 1 1 1 3 1 3 1 3 1 3 1 4 1 1 1 2 1 1 3 11 1 4 1 1 1 5 2 1 2 7 1 4 1 6 1 5 1 3 1 3 1 5 3 3 1 1 1 5 1 1 2 2 1 1 1 5 1 2 1 7 1 2 9 1 3 7 1 1 1 5 1 9 1 3 1 7 1 1 1 6 2 1 1 8 2 4 1 7 1 1 1 1 1 1 1 2 1 1 1 2 1 6 2 10 3 8 1 4 1 6 1 1 2 2 1 3 1 4 1 9 1 1 2 6 1 2 1 7 1 3 1 8 1 9 1 7 2 1 1 4 1 3 1 2 1 1 1 2 1 1 1 2 1 2 1 1 1 5 1 4 3 5 1 5 1 4 1 1 2 4 2 2 3 4 1 14 1 1 4 5 1 3 1 2 1 3 1 2 1 1 1 1 1 10 1 2 2 26 1 2 2 1 2 2 1 1 1 4 1 5 2 3 1 3 2 1 1 7 1 5 1 8 1 1 1 1 1 2 1 6 2 6 1 1 1 4 1 3 2 2 1 4 1 1 2 4 1 2 2 8 1 4 2 4 2 7 1 5 1 3 1 3 1 11 2 5 1 3 1 1"/>
<path d="M277 759.5h1125" stroke-dasharray="2 1 5 1 39 1 2 1 15 1 53 1 16 1 4 1 3 1 62 1 8 1 9 1 6 1 8 1 4 1 1 2 3 1 4 1 4 1 6 1 9 1 29 1 13 1 54 1 13 1 37 1 4 1 12 1 24 1 18 1 9 1 5 1 1 1 1 1 6 1 5 1 2 1 18 1 4 1 45 1 40 1 49 1 19 2 18 1 20 1 1 1 29 1 3 1 4 1 1 1 13 1 13 1 20 1 52 1 33 1 5 1 123 1 26 1 32 1"/>
<path d="M277 762.5h1125" stroke-dasharray="17 1 1 1 43 1 17 1 1 1 170 1 24 1 39 1 1 1 56 1 9 1 42 1 14 1 15 1 30 1 28 1 8 1 13 1 85 1 8 1 9 1 77 1 28 1 32 1 11 1 42 1 13 1 58 1 2 1 46 1 21 1 86 1 47 0"/>
<path d="M277 763.5h1125" stroke-dasharray="0 1 1 2 1 3 3 4 1 2 1 1 3 1 2 3 2 7 2 5 2 3 2 2 6 1 2 3 1 4 1 5 1 2 1 5 1 1 2 2 2 8 3 6 1 3 2 1 1 7 5 2 3 1 1 3 1 2 2 2 2 11 2 1 1 1 1 1 1 3 1 1 1 1 3 2 3 2 1 8 1 1 2 3 1 1 1 2 3 2 1 1 1 6 1 1 3 2 1 1 1 4 1 4 2 2 2 2 1 1 1 1 2 3 2 1 2 3 1 1 1 5 1 2 1 3 2 8 1 2 1 1 4 4 1 2 6 5 1 12 1 1 3 1 1 1 2 1 4 2 3 7 2 1 2 3 2 1 1 1 1 1 2 1 1 3 1 3 1 1 1 4 1 2 1 2 2 1 2 1 1 5 2 1 1 2 2 2 3 2 2 2 1 2 1 3 1 1 2 2 1 1 2 1 1 5 1 1 1 3 1 2 1 2 1 1 1 4 1 6 1 1 1 5 2 1 1 2 1 6 3 2 1 5 3 1 2 1 1 3 1 2 2 1 1 1 2 2 1 2 1 5 1 5 1 3 1 5 1 3 18 1 1 1 1 1 1 1 1 1 1 1 1 4 1 6 5 1 1 6 3 2 2 1 1 4 1 1 1 7 1 3 1 1 1 3 1 3 4 3 1 3 3 1 1 1 1 2 1 1 3 1 2 1 1 4 2 2 3 1 1 1 1 3 1 2 1 2 6 4 1 5 1 1 1 1 2 3 1 1 1 4 2 5 2 2 1 3 1 1 1 6 1 2 4 3 4 7 2 6 2 7 2 8 3 3 1 4 2 3 1 1 2 1 2 2 3 1 2 1 1 1 1 1 13 2 1 6 8 2 1 3 1 4 1 2 3 1 1 8 1 1 1 4 1 4 3 7 1 5 2 4 1 5 1 2 1 2 1 2 1 2 1 1 1 1 3 5 1 2 1 1 1 1 1 2 1 2 1 1 1 1 1 3 2 2 3 1 3 9 1 4 1 1 1 1 2 2 2 1 1 4 1 3 3 2 2 2 2 1 2 1 2 1 2 1 1 1 1 2 2 3 2 1 1 1 2 2 1 2 1 1 1 2 1 1 1 1 1 7 1 1 2 3 1 4 3 1 1 4 3 4 1 3"/>
<path d="M277 764.5h1125" stroke-dasharray="0 344 1 2 2 51 1 162 3 1 3 108 1 8 1 164 1 57 1 138 1 75"/>
<path d="M277 765.5h1125" stroke-dasharray="0 568 1 556"/>
<rect x="277" y="760" width="1125" height="2" fill="#00ffff" stroke="none"/>
<path d="M277 786.5h1125" stroke-dasharray="0 643 1 1 2 478"/>
<path d="M277 787.5h1125" stroke-dasharray="0 153 1 121 1 366 2 1 2 478"/>
<path d="M277 788.5h1125" stroke-dasharray="0 1 1 2 1 17 2 3 1 8 1 4 1 11 1 2 1 21 2 8 1 7 1 10 1 6 1 2 1 32 2 1 4 11 1 13 1 12 2 1 1 1 2 12 1 3 1 27 2 7 1 2 1 7 2 4 2 1 3 6 1 16 1 40 1 3 1 27 1 15 1 1 1 2 1 23 1 2 1 9 1 10 1 11 1 30 1 2 1 31 1 3 1 10 1 9 1 14 1 3 1 2 1 5 1 2 1 63 3 1 3 2 1 23 1 8 1 9 1 19 1 1 1 10 1 1 1 24 1 28 1 30 1 36 2 9 1 2 1 7 1 1 1 22 1 3 1 1 1 19 1 10 1 1 1 4 1 8 2 5 1 10 1 2 1 17 1 14 1 28 1 26 1 3 2 17 1 9 1 2 1 28"/>
<path d="M277 789.5h1125" stroke-dasharray="0 1 2 1 3 1 5 1 3 2 2 1 3 1 3 1 2 1 4 1 4 1 6 1 4 1 4 1 3 1 3 1 1 1 1 1 3 1 5 1 19 2 1 1 4 1 10 1 4 1 7 1 2 1 3 1 6 2 9 2 1 2 1 1 2 1 4 1 11 1 12 1 9 3 13 1 2 1 14 1 1 1 4 1 4 2 34 1 3 1 1 3 7 1 1 2 4 1 4 1 5 1 1 1 2 5 5 1 5 1 18 1 1 1 5 1 8 1 1 2 1 1 4 1 6 1 2 1 2 2 3 3 8 1 5 1 2 1 7 1 3 1 4 1 2 1 1 1 11 1 2 1 2 2 2 1 3 1 1 1 2 1 4 1 5 2 12 1 4 1 1 1 2 1 2 1 7 1 5 2 3 1 8 2 7 1 1 1 4 1 10 1 4 1 1 1 5 1 1 1 6 1 18 1 13 1 2 1 2 1 15 1 2 2 15 2 3 1 1 1 4 2 2 1 1 1 1 1 3 1 2 1 3 1 1 1 5 1 5 1 19 2 9 1 2 1 2 1 7 1 10 1 3 2 2 1 8 1 4 1 7 1 4 1 2 2 2 1 3 1 13 1 1 1 7 1 1 1 1 1 4 1 4 1 1 1 2 2 6 1 11 1 5 1 2 1 10 1 10 2 6 2 7 1 28 1 2 2 5 1 2 1 5 1 7 1 1 1 5 1 2 2 1 3 4 1 2 1 13 1 1 1 2 2 3 1 1 1 3 1 4 1 1 1 19 1 1 1 2 1 1 1 1 1 10 1 3 2 5 1 5 1 3 1 1 1 2 1 1 1 3 1 5 0"/>
<path d="M277 790.5h1125" stroke-dasharray="520 1 604 0"/>
<path d="M277 792.5h1125" stroke-dasharray="37 1 5 1 196 1 27 1 29 1 223 1 30 1 269 1 204 1 96 0"/>
<path d="M277 793.5h1125" stroke-dasharray="0 2 11 2 3 1 1 2 3 3 2 2 5 1 3 1 1 1 3 1 1 1 1 1 1 1 3 1 3 1 1 1 6 1 3 1 2 1 1 1 2 3 1 1 5 1 3 3 1 1 6 2 3 1 2 1 3 1 1 2 3 2 4 2 1 2 2 1 1 1 6 1 9 1 1 1 3 3 1 1 7 1 5 1 2 1 4 3 1 1 2 1 3 2 1 3 1 1 1 2 3 1 1 1 2 1 3 1 3 3 7 6 1 1 2 2 2 1 10 1 1 1 2 1 3 1 8 1 3 2 2 1 2 1 2 2 1 1 2 1 4 2 1 1 1 1 1 2 2 3 2 1 1 1 9 1 1 1 7 2 5 4 1 1 1 2 1 1 1 3 5 2 1 1 1 3 1 1 3 2 2 1 6 1 1 1 1 1 1 1 4 2 1 2 6 1 2 1 1 2 2 1 2 1 2 1 1 1 3 3 4 2 6 2 6 1 4 1 1 1 3 1 1 1 1 1 1 1 2 2 1 1 1 2 1 1 1 1 5 1 4 1 3 1 1 2 2 1 1 1 1 1 1 1 2 2 2 2 7 1 1 2 1 1 1 2 6 2 2 1 1 1 6 1 2 2 4 2 1 1 5 1 4 1 5 1 2 1 2 1 5 1 1 1 3 2 5 2 1 1 1 1 1 2 3 2 1 1 5 3 13 1 9 1 1 2 5 1 2 1 9 1 4 2 1 1 2 1 1 1 2 3 4 2 3 2 1 1 1 4 3 4 2 3 2 3 6 1 2 1 3 4 1 2 1 3 1 1 7 2 1 1 1 2 3 2 1 1 1 1 1 2 3 2 1 1 2 1 4 1 2 2 2 1 5 1 2 1 1 1 2 3 2 1 3 1 9 1 2 1 1 3 7 3 2 1 2 1 2 2 1 1 1 3 1 3 5 1 2 3 7 1 5 2 3 1 1 1 3 2 6 1 1 1 6 2 1 2 1 1 1 1 3 1 2 5 8 1 1 1 1 4 3 2 1 1 1 2 3 1 2 1 2 4 1 1 3 1 3 1 2 1 3 1 3 2 11 3 1 1 3 2 5 1 4 2 2 1 3 2 2 1 1 1 2 1 1 2 2 1 2 1 2 2 1 2 3 1 1 2 12 1 1 2 2 1 9 1 1 3 2 2"/>
<path d="M277 794.5h1125" stroke-dasharray="0 85 1 8 1 35 2 18 2 2 3 114 1 1 2 1 2 26 1 174 1 8 1 1 1 22 1 10 1 27 1 35 1 53 7 1 2 31 1 63 1 8 1 31 1 9 1 4 1 9 1 33 1 92 1 3 1 13 1 13 1 51 1 40 1 30 1 28"/>
<path d="M277 795.5h1125" stroke-dasharray="0 273 1 2 1 367 1 1 1 1 1 1 1 474"/>
<path d="M277 796.5h1125" stroke-dasharray="0 276 1 848"/>
<rect x="277" y="791" width="1125" height="1" fill="#00ffff" stroke="none"/>
<path d="M277 818.5h1125" stroke-dasharray="0 53 1 3 1 9 1 70 1 40 1 12 1 155 1 7 1 52 1 12 1 22 1 59 1 109 1 90 1 36 1 79 1 8 1 203 1 20 1 15 1 51"/>
<path d="M277 819.5h1125" stroke-dasharray="2 2 1 2 5 1 3 1 1 3 3 3 2 1 1 3 1 2 2 1 2 1 1 5 3 1 1 2 2 1 4 4 1 1 1 1 2 1 2 2 3 3 1 2 2 2 2 1 2 3 2 4 4 4 1 2 1 1 1 1 2 2 2 1 1 3 1 2 1 1 7 1 2 3 10 3 3 2 3 2 6 1 4 4 6 6 2 3 1 1 2 1 1 4 3 1 4 1 1 1 3 1 1 5 2 2 5 2 2 1 1 3 1 4 3 1 1 4 1 2 2 2 1 1 2 1 1 1 3 3 1 1 1 5 2 2 3 1 1 8 1 3 1 1 1 1 2 2 1 4 5 1 3 2 1 5 5 3 1 1 1 1 2 1 9 1 1 1 1 1 1 1 2 3 1 4 1 2 1 1 2 1 9 1 1 2 3 2 3 4 1 1 1 1 3 2 1 1 1 3 5 1 5 2 1 1 2 2 1 1 1 1 1 4 3 1 1 1 1 2 2 1 1 1 2 3 6 1 1 4 1 1 1 1 2 3 1 1 1 2 1 1 2 1 2 2 1 1 1 3 3 2 1 5 2 1 1 1 3 1 2 6 2 1 1 1 1 1 2 10 3 2 1 2 1 2 2 1 1 3 1 2 2 1 1 1 8 2 2 1 2 3 3 4 2 1 3 1 1 1 2 2 1 3 2 1 3 1 2 2 1 2 2 1 2 1 3 1 4 3 2 1 2 1 1 4 1 1 1 1 5 4 3 2 2 1 1 2 1 1 2 1 2 1 4 4 4 2 6 1 1 2 6 1 2 1 1 1 1 1 2 2 2 1 2 1 1 1 1 1 3 5 1 3 1 3 3 1 2 2 2 1 1 4 2 4 4 1 1 1 1 2 2 1 1 1 2 2 1 1 1 1 2 2 2 1 1 1 1 2 3 1 2 2 3 2 2 1 2 1 1 2 2 2 3 4 2 3 1 1 1 2 3 1 2 1 1 2 1 1 1 1 1 1 4 1 2 1 1 2 1 1 2 1 4 5 3 2 3 2 2 2 4 1 1 1 3 2 1 1 2 2 1 1 3 1 2 1 3 1 2 1 1 1 3 2 2 2 2 1 3 1 1 1 1 2 1 2 1 4 4 1 1 2 1 2 3 1 2 5 1 2 4 1 2 3 4 1 3 2 5 3 3 1 1 1 1 1 1 1 1 1 1 1 3 2 6 1 1 2 1 2 2 3 1 1 1 5 1 4 2 1 2 1 1 1 2 5 2 3 2 0"/>
<path d="M277 820.5h1125" stroke-dasharray="24 1 314 1 64 1 52 1 84 1 3 1 16 1 87 1 369 1 78 1 24 0"/>
<path d="M277 823.5h1125" stroke-dasharray="3 3 1 1 5 1 12 1 5 1 5 1 23 1 1 1 1 1 5 1 1 1 6 1 1 1 5 1 9 1 5 2 7 1 3 2 16 1 4 1 7 1 18 1 1 1 10 1 2 1 3 1 1 1 18 1 5 1 6 1 2 2 6 1 2 1 7 1 13 1 4 2 10 3 9 2 11 1 5 1 10 1 6 1 2 1 9 1 10 1 1 2 2 1 7 1 11 1 6 1 6 1 2 1 3 1 2 2 3 3 3 2 15 1 1 1 7 1 7 2 4 1 8 1 6 1 5 3 7 1 2 1 8 1 1 1 3 1 2 1 16 1 15 2 7 2 3 1 7 1 36 2 1 1 15 1 5 1 5 1 9 1 4 1 2 1 13 1 20 1 5 1 4 1 1 2 3 2 4 1 5 1 9 1 14 1 3 1 6 1 4 2 10 1 6 1 13 1 6 1 4 1 4 1 2 1 4 1 3 1 4 1 4 2 3 2 9 2 4 1 10 1 9 2 2 1 5 1 12 1 6 1 16 1 6 1 8 1 8 1 5 1 11 1 1 1 1 1 12 1 7 1 5 1 4 1 1 1 3 2 2 1 3 1 2 1 2 2 1 1 9 1 6 1 22 1 4 1 1 1 9 1 2 1 4 1 11 1 5 2 25 1"/>
<path d="M277 824.5h1125" stroke-dasharray="0 11 1 2 1 1 1 10 1 11 2 10 1 8 1 8 3 14 1 7 1 3 1 8 1 8 1 3 1 11 1 6 1 2 2 2 1 27 1 18 1 6 1 19 1 10 1 28 1 1 1 16 1 3 1 24 1 3 1 19 1 13 2 13 1 16 2 6 1 62 1 5 1 1 1 6 1 11 1 12 1 7 1 7 2 10 1 1 1 15 1 3 1 2 2 16 1 5 1 35 1 2 1 40 3 20 1 1 2 15 1 2 1 21 1 1 1 2 1 8 1 1 1 16 1 2 1 14 1 1 1 18 1 2 1 4 1 21 1 3 1 10 2 27 2 19 1 9 1 3 1 3 1 1 1 1 1 3 1 2 1 3 2 5 1 25 1 2 1 2 1 3 1 4 1 19 1 10 1 22 1 2 1 6 1 7 1 22 1 5 1 25 1 5 1 19 1 6 1 3"/>
<rect x="277" y="821" width="1125" height="2" fill="#00ffff" stroke="none"/>
<path d="M277 847.5h1125" stroke-dasharray="0 250 1 354 2 4 1 2 1 510"/>
<path d="M277 848.5h1125" stroke-dasharray="0 244 1 4 2 1 3 1 1 345 2 1 2 1 2 1 1 1 2 311 1 198"/>
<path d="M277 849.5h1125" stroke-dasharray="0 6 1 4 2 4 1 2 1 7 3 2 2 1 2 7 1 1 1 5 1 1 1 2 1 4 1 3 3 8 1 3 2 2 1 2 1 6 1 3 1 2 2 3 2 2 1 1 2 4 3 2 3 3 1 7 1 2 1 1 3 2 1 1 2 5 2 7 1 3 1 2 1 6 2 2 1 1 1 2 1 4 3 4 2 1 1 6 1 1 5 1 1 8 1 8 3 2 2 1 14 2 1 3 1 1 2 1 1 1 1 1 3 1 1 6 1 1 2 3 2 1 1 3 1 1 1 1 1 2 1 3 1 1 1 9 1 4 2 9 1 2 1 1 1 8 3 1 1 5 1 3 2 9 1 1 1 6 2 1 1 7 2 2 1 2 1 1 1 1 3 3 1 1 2 1 1 3 2 2 1 1 1 10 2 4 3 9 1 4 1 1 1 3 2 17 2 1 3 1 1 2 1 1 1 3 1 9 1 3 1 5 1 7 1 1 1 3 1 1 1 3 2 1 3 1 3 2 1 6 4 2 1 7 1 2 2 1 1 1 1 3 2 1 1 3 1 1 2 1 8 1 7 3 1 7 1 4 1 1 2 1 3 3 1 5 1 1 1 4 1 6 3 3 1 5 1 1 2 1 1 4 4 3 2 3 1 1 1 1 3 2 1 7 2 2 4 3 1 1 2 8 2 4 1 7 3 3 1 2 1 1 3 6 1 1 3 9 1 6 1 1 1 1 1 2 1 3 2 3 1 5 1 2 1 2 1 10 1 4 2 3 1 1 2 8 1 3 1 1 2 6 1 3 1 1 2 7 1 2 1 3 1 2 3 1 2 7 1 7 1 3 1 6 1 6 1 1 1 1 2 6 1 2 2 3 1 1 2 2 1 2 2 5 1 2 1 5 2 3 1 4 1 1 1 1 2 2 1 4 1 1 1 1 2 6 4 3 1 3 1 1 1 2 1 5 1 3 2 6 2 7 3 9 1 7 1 8 1 1 1 7 1 1 2 3 1 2 1 1 1 1 1 13 2 0"/>
<path d="M277 850.5h1125" stroke-dasharray="10 1 53 1 29 1 22 2 28 1 12 1 15 1 88 1 39 1 12 1 22 1 3 1 4 1 11 1 7 1 15 1 7 2 42 1 11 1 30 1 16 1 3 3 33 1 19 1 84 1 15 1 33 1 101 1 35 1 18 1 15 1 43 1 2 1 7 1 48 1 2 1 11 1 36 1 18 1 4 1 14 2 33 1 2 1 4 1 7 1 12 0"/>
<path d="M277 853.5h1125" stroke-dasharray="5 1 19 1 21 1 21 2 2 1 9 1 3 1 26 1 29 1 16 1 36 1 4 1 110 1 24 1 22 1 18 1 48 1 7 1 1 1 1 1 8 1 7 1 10 1 35 1 11 1 3 1 31 1 6 1 12 1 63 1 27 1 15 1 27 1 20 1 17 1 18 1 69 1 5 1 8 2 34 1 28 1 45 1 9 1 22 1 93 1 33 0"/>
<path d="M277 854.5h1125" stroke-dasharray="0 1 1 18 1 2 1 2 1 2 3 5 1 2 3 2 1 5 1 3 2 3 1 13 1 7 1 1 2 4 1 1 2 3 1 1 1 1 1 5 1 2 1 5 1 4 1 3 2 1 1 10 1 8 1 1 1 3 1 12 1 1 4 6 2 2 1 11 1 1 1 9 2 4 1 1 1 9 1 1 1 2 2 4 2 7 1 1 6 1 4 9 5 4 2 1 1 6 4 2 4 9 1 3 1 7 3 3 2 6 1 1 2 1 3 4 1 1 1 5 1 5 1 3 1 3 1 4 1 1 1 3 1 1 2 2 1 3 1 8 1 1 1 1 2 2 1 1 2 2 2 1 1 4 1 1 1 1 3 3 1 1 1 3 1 2 2 6 2 3 1 5 2 1 1 1 3 1 1 4 1 3 1 3 1 7 1 3 2 5 2 2 1 1 1 7 3 3 1 10 1 3 1 2 1 6 1 5 1 1 1 1 1 8 1 3 1 1 2 4 1 5 2 2 2 2 1 3 1 1 1 5 1 1 3 1 1 2 2 1 1 1 1 1 3 2 1 3 1 3 1 4 1 13 1 4 1 5 1 2 1 2 1 5 2 2 1 1 3 2 1 17 1 3 1 10 1 6 2 6 1 1 1 1 1 3 1 3 1 3 3 9 1 6 1 1 2 9 2 1 1 2 1 3 6 4 1 2 1 4 1 10 1 4 2 2 2 1 1 1 1 3 1 1 1 13 1 1 2 2 1 6 1 5 1 3 1 1 1 7 1 4 1 3 2 4 1 5 1 6 1 2 1 2 1 2 1 5 2 1 1 4 1 1 1 5 1 3 1 1 4 2 1 2 2 2 1 9 1 1 2 2 2 5 1 4 1 4 1 2 1 3 1 3 3 7 2 1 2 3 1 2 4 1 1 2 1 1 1 2 2 7 1 7 2 10 1 3 1 5 1 3 2 1 2 2 2 2 2 3 3 1 1 4 2 1 3 1 1 3 1 1 2 2 2 0"/>
<path d="M277 855.5h1125" stroke-dasharray="0 60 1 186 2 1 3 1 3 192 1 142 1 7 1 1 1 1 1 3 1 1 1 3 2 509"/>
<path d="M277 856.5h1125" stroke-dasharray="0 247 2 1 1 359 1 514"/>
<path d="M277 857.5h1125" stroke-dasharray="0 250 1 874"/>
<rect x="277" y="851" width="1125" height="2" fill="#00ffff" stroke="none"/>
<path d="M277 878.5h1125" stroke-dasharray="0 134 1 68 1 1 1 1 1 1 2 1 1 781 1 130"/>
<path d="M277 879.5h1125" stroke-dasharray="0 10 1 8 1 3 1 4 1 4 2 7 1 1 1 2 1 24 1 3 1 1 1 14 1 8 1 18 1 12 1 4 1 25 1 13 1 1 1 1 1 19 1 1 8 21 1 9 1 4 1 4 1 4 1 2 2 14 1 1 1 20 1 2 1 2 1 15 2 5 1 10 1 4 1 7 1 9 1 4 2 27 1 4 1 13 2 17 1 4 1 2 1 3 1 16 1 3 1 4 1 3 1 2 1 13 1 16 1 8 1 2 1 1 1 12 1 9 1 1 2 15 1 1 1 5 1 3 1 2 1 14 1 1 1 11 2 1 1 5 1 17 1 55 1 1 1 34 1 2 1 15 2 11 1 2 1 3 1 7 1 8 1 4 1 18 1 2 1 12 1 10 1 3 1 20 2 3 1 9 1 5 1 6 1 14 1 6 1 3 1 4 1 11 1 9 1 7 1 14 1 8 1 16 1 21 1 11 1 10 1 11 1 15 1 8 2 3 1 3 1 39"/>
<path d="M277 880.5h1125" stroke-dasharray="1 1 10 1 1 1 2 1 7 1 5 1 5 1 2 1 4 1 4 1 2 1 4 1 1 1 1 1 1 1 5 1 8 2 3 1 7 1 2 1 1 1 6 3 1 1 10 1 5 1 6 1 2 1 10 1 5 1 1 1 12 1 6 1 5 1 1 1 11 1 2 1 1 1 14 1 1 1 2 1 6 1 3 1 2 1 3 1 1 1 5 1 1 1 2 1 1 1 4 1 2 1 6 1 2 2 5 1 3 1 2 2 4 2 16 1 1 2 2 1 19 1 2 2 11 1 12 1 9 2 2 1 3 2 1 1 3 2 2 1 4 1 1 1 5 1 2 1 10 1 7 1 3 1 5 1 4 2 1 1 1 1 5 1 4 1 2 1 5 1 2 2 7 1 11 1 2 1 4 1 7 1 9 1 1 1 3 1 6 1 19 1 11 1 11 1 18 2 9 1 3 1 2 1 7 1 7 1 1 1 2 2 2 2 8 1 1 1 19 1 4 1 4 1 1 1 3 1 11 1 20 2 7 1 1 1 2 1 1 1 5 1 13 1 6 1 7 1 1 1 1 1 2 1 6 3 1 2 3 1 6 1 5 3 2 1 1 1 2 1 11 1 6 1 4 1 5 1 16 1 9 1 15 1 5 1 12 1 3 1 5 2 2 1 6 1 8 1 7 1 7 1 7 1 4 1 9 1 3 1 6 1 2 1 1 1 1 1 9 1 4 1 9 1 6 1 5 1 2 1 8 1 2 1 10 1 2 1 18 1 4 1 8 2 5 1 17 2 2 2 1 0"/>
<path d="M277 881.5h1125" stroke-dasharray="374 1 750 0"/>
<path d="M277 883.5h1125" stroke-dasharray="410 1 119 1 43 1 97 1 351 1 51 1 48 0"/>
<path d="M277 884.5h1125" stroke-dasharray="0 2 2 1 5 1 2 1 3 1 1 1 5 3 6 2 2 1 2 1 2 1 2 5 3 1 1 1 2 2 3 3 2 3 1 1 2 1 2 3 1 1 2 4 3 4 3 1 1 3 2 1 1 2 3 6 3 1 1 1 5 3 1 2 1 2 5 3 1 1 3 2 1 1 7 1 5 1 1 1 1 1 2 1 5 1 5 1 12 1 7 1 3 2 2 1 1 3 5 2 4 1 3 1 2 1 6 1 5 4 1 2 2 2 1 1 1 1 1 2 2 1 2 2 5 1 5 1 2 2 3 2 2 1 3 2 1 3 1 1 1 1 6 2 2 1 3 1 3 3 1 1 3 5 1 1 1 1 2 2 2 1 5 1 1 1 1 2 3 1 1 2 2 1 2 3 1 1 1 3 1 1 1 1 1 1 2 1 1 2 3 1 2 4 1 1 1 1 1 1 2 3 3 1 3 4 1 1 1 1 5 1 1 2 1 1 2 1 3 1 2 1 3 1 1 8 1 1 4 1 1 1 4 5 1 1 2 3 1 1 2 1 3 1 2 1 1 1 1 1 1 1 5 1 3 1 2 1 1 3 1 2 6 2 1 2 4 2 1 2 1 1 2 1 1 3 1 4 2 5 3 3 1 1 5 1 2 1 1 1 1 1 2 2 1 1 1 2 1 1 1 1 1 4 1 1 5 1 1 1 3 2 1 2 2 2 2 2 2 1 6 1 1 2 1 2 2 4 3 1 4 1 8 1 1 1 3 1 2 1 1 1 1 2 1 1 2 1 2 1 4 2 5 2 1 1 7 1 1 6 1 2 3 5 3 3 4 1 1 2 3 1 2 1 1 1 5 1 2 1 3 1 5 4 1 2 3 1 2 1 7 1 3 1 1 1 3 9 7 2 1 1 1 2 1 1 1 2 1 2 1 1 4 3 1 1 5 2 3 1 3 1 1 2 3 1 2 1 2 2 1 3 2 1 2 1 1 3 2 1 1 1 1 1 1 1 1 2 4 1 2 1 4 3 3 2 1 1 2 1 2 3 2 4 1 1 2 3 1 1 1 1 1 1 5 1 1 3 2 1 3 1 2 4 1 3 3 1 1 1 1 1 1 3 3 1 3 1 2 1 3 1 3 1 2 2 4 3 1 1 2 2 2 1 1 3 2 1 2 1 1 1 2 2 1 1 2 2 2 1 2 2 1 3 2 1 2 2 1 1 1 1 3 2 2 3 1 1 6 1 2 1 2 1 1 1 1 5 4 1 2 0"/>
<path d="M277 885.5h1125" stroke-dasharray="0 68 1 75 1 22 2 36 4 1 1 55 1 42 1 57 1 13 1 101 1 66 1 14 1 99 1 10 1 29 1 270 1 18 1 6 1 22 1 40 1 57"/>
<path d="M277 886.5h1125" stroke-dasharray="0 206 1 3 1 914"/>
<rect x="277" y="882" width="1125" height="1" fill="#00ffff" stroke="none"/>
<path d="M277 907.5h1070" stroke-dasharray="0 391 1 678"/>
<path d="M277 908.5h1070" stroke-dasharray="0 391 2 1 1 33 1 1 2 169 1 468"/>
<path d="M277 909.5h1070" stroke-dasharray="0 15 1 5 1 25 1 6 1 22 1 30 1 9 1 10 1 137 2 29 1 84 1 1 1 2 2 1 2 1 1 1 2 5 1 12 1 9 1 1 1 1 2 2 3 18 1 2 1 110 1 3 1 27 3 2 2 28 1 4 1 18 1 7 1 5 1 4 1 4 1 88 1 37 1 43 2 9 1 4 1 76 1 20 1 33 1 3 1 62"/>
<path d="M277 910.5h1070" stroke-dasharray="0 2 12 1 1 1 1 1 6 2 1 1 1 4 3 1 6 1 1 1 1 2 6 1 5 1 2 2 5 1 3 1 5 1 5 1 4 2 3 1 3 1 1 3 3 1 1 1 1 2 5 1 2 1 2 2 2 1 1 1 2 1 1 1 4 1 5 1 5 1 2 2 3 2 4 1 1 1 1 1 1 4 1 2 1 2 11 5 2 1 2 1 2 1 10 1 1 1 2 1 2 2 1 1 1 1 1 4 4 2 1 1 2 1 3 3 1 1 1 2 2 1 1 1 5 1 1 2 2 2 1 2 4 1 2 1 5 3 2 1 2 3 1 1 1 1 1 1 2 1 1 1 3 1 3 1 2 2 2 2 1 1 3 2 2 1 2 1 1 2 4 1 7 1 8 1 4 1 1 2 3 1 4 1 13 2 1 1 2 1 3 2 4 2 3 1 2 1 7 1 8 1 4 1 2 1 1 2 6 2 2 5 1 2 8 1 1 1 1 1 2 1 4 1 1 3 1 1 1 1 5 1 4 2 1 1 3 1 2 3 5 1 2 2 2 1 3 2 3 1 1 1 5 4 2 2 1 1 2 1 2 1 3 1 5 1 2 2 11 3 1 2 5 1 4 1 4 2 1 1 8 2 8 1 1 1 3 4 1 1 1 1 6 3 1 1 1 1 7 1 1 1 1 3 2 1 1 1 2 1 3 1 3 1 2 1 4 3 2 4 1 1 2 1 1 1 1 4 2 2 1 2 1 1 1 1 1 1 1 1 1 2 2 2 2 2 4 1 1 1 1 1 3 3 1 1 1 1 3 1 1 1 3 1 2 1 4 2 1 1 4 1 1 2 1 1 2 1 7 2 2 2 1 1 4 3 10 1 2 2 1 3 1 3 3 3 2 1 3 4 10 1 3 3 3 1 1 1 3 1 1 1 3 1 2 1 1 1 1 1 1 1 1 3 1 1 3 1 1 2 1 5 1 1 2 1 1 1 3 1 3 3 1 1 8 3 5 1 1 4 2 2 2 1 3 1 2 1 1 2 5 3 3 2 1 4 1 1 3 1 1 1 2 1 2 1 6 1 1 1 3 1 2 2 2 1 5 1 3 2 1 4 4 1 1 2 1 1 4 2 2 1 2 0"/>
<path d="M277 911.5h1070" stroke-dasharray="133 1 162 1 271 1 58 1 119 1 37 1 246 1 37 0"/>
<path d="M277 913.5h1070" stroke-dasharray="19 1 359 1 291 1 76 1 321 0"/>
<path d="M277 914.5h1070" stroke-dasharray="6 1 1 1 10 1 9 2 1 1 2 1 3 1 5 1 2 1 2 2 4 2 8 2 8 1 9 1 4 1 12 1 4 1 6 3 5 1 8 1 3 1 2 3 21 1 4 1 5 2 4 2 2 1 5 1 5 1 1 2 1 1 10 1 1 1 4 1 11 1 5 1 3 1 3 1 15 1 6 1 2 1 2 1 3 1 5 1 1 1 25 1 3 1 9 1 1 2 11 1 1 1 3 1 4 1 1 2 1 1 17 1 1 2 3 1 15 1 17 1 4 1 23 1 3 1 2 2 4 1 17 1 6 1 2 1 4 1 3 1 4 1 4 1 6 1 1 1 6 1 3 1 4 1 6 1 11 1 3 1 9 1 23 1 6 1 14 1 9 3 1 1 1 1 3 1 7 1 3 1 6 1 1 1 1 1 3 3 2 1 6 2 5 1 1 3 1 1 5 1 4 1 6 1 7 1 1 1 15 2 4 1 5 1 3 1 3 2 1 1 1 1 1 3 1 1 1 1 8 1 1 1 1 1 11 1 5 1 4 1 21 1 5 1 1 2 4 1 3 1 1 1 10 1 5 1 4 2 5 1 3 2 2 1 3 1 11 2 22 1 1 1 6 1 4 1 10 1 13 1 10 1 9 1 6 1 10 1 1 1 13 1 1 2 5 2 1 1 1 1 3 1 7 1 3 1 8 3 3 1 1 1 13 0"/>
<path d="M277 915.5h1070" stroke-dasharray="0 5 1 8 2 72 1 14 1 9 1 19 1 2 1 10 1 10 1 4 1 4 1 2 2 5 1 25 1 1 1 19 1 8 2 4 1 6 1 5 1 1 1 41 1 3 1 1 1 3 1 20 1 25 1 6 1 19 1 5 9 4 1 4 1 1 1 6 1 3 1 5 1 1 1 1 2 1 5 7 1 4 2 10 1 8 1 11 1 6 2 22 1 16 1 33 1 6 3 3 1 5 1 2 1 11 1 1 4 1 3 18 1 1 1 7 1 3 2 13 1 1 1 30 1 1 1 4 2 8 1 6 1 8 1 12 1 5 1 26 2 5 1 8 1 27 1 9 1 6 1 22 1 11 1 22 1 11 1 5 1 15 1 6 1 3 1 30 1 33 1 2 1 10 1 27 1 5 1 13 1 11"/>
<path d="M277 916.5h1070" stroke-dasharray="0 172 1 215 1 2 4 34 1 3 1 1 2 165 2 3 1 462"/>
<path d="M277 917.5h1070" stroke-dasharray="0 391 1 2 1 40 1 167 1 466"/>
<rect x="277" y="912" width="1070" height="1" fill="#00ffff" stroke="none"/>
<path d="M297.5 201V231M314.5 194V233M467.5 202V228M518.5 196V228M563.5 205V224M581.5 199V228M619.5 197V232M872.5 200V230M925.5 197V229M974.5 201V231M990.5 199V227M1039.5 203V233M1056.5 200V229M1151.5 198V230M1225.5 200V237M1264.5 201V233M1327.5 203V231M1371.5 202V234M326.5 236V258M413.5 228V259M453.5 235V253M555.5 226V266M593.5 213V271M732.5 226V270M832.5 222V270M905.5 230V266M982.5 225V257M1000.5 225V267M1038.5 225V263M1055.5 224V261M1099.5 227V264M1163.5 222V264M1181.5 230V264M1220.5 228V258M1282.5 225V270M1326.5 231V266M1363.5 236V262M357.5 260V296M373.5 257V295M390.5 264V289M734.5 251V292M1070.5 251V297M375.5 290V317M420.5 289V325M523.5 288V325M1088.5 294V315M937.5 323V349M982.5 320V352M1075.5 318V350M1103.5 330V341M738.5 362V372M1080.5 350V381M1118.5 355V380M1264.5 356V378M1300.5 349V383M1349.5 348V388M691.5 379V412M878.5 381V420M1148.5 390V406M1200.5 392V403M284.5 416V440M321.5 412V439M342.5 406V444M359.5 418V436M467.5 418V432M620.5 416V441M773.5 407V444M1102.5 415V440M1146.5 413V440M1212.5 412V442M1252.5 409V449M1338.5 409V449M382.5 425V479M407.5 441V475M454.5 441V480M492.5 440V472M633.5 452V465M673.5 444V476M744.5 442V470M813.5 442V472M829.5 440V475M879.5 439V476M929.5 441V476M1037.5 440V480M1088.5 450V461M1133.5 442V479M1214.5 438V480M1231.5 436V483M463.5 465V504M593.5 472V504M698.5 476V502M888.5 473V509M905.5 471V504M966.5 463V504M1007.5 465V504M1115.5 471V509M1190.5 475V503M1349.5 481V492M1363.5 476V504M281.5 501V540M486.5 515V525M584.5 506V531M679.5 497V534M742.5 497V531M759.5 511V525M1017.5 507V534M1112.5 493V536M1263.5 500V538M312.5 533V571M397.5 542V554M434.5 531V573M624.5 532V564M739.5 529V571M784.5 533V568M1066.5 524V566M283.5 563V596M688.5 564V596M1078.5 573V589M1118.5 562V601M1209.5 571V586M1269.5 562V597M609.5 586V626M685.5 601V620M296.5 624V655M762.5 628V654M959.5 624V653M1115.5 625V650M1225.5 628V653M341.5 658V686M544.5 650V684M740.5 648V686M300.5 689V718M507.5 687V708M748.5 690V715M900.5 679V718M1175.5 683V715M1278.5 677V718M1296.5 687V716M600.5 721V746M696.5 711V745M745.5 723V740M834.5 718V746M1035.5 715V743M1197.5 712V749M1213.5 709V747M1351.5 714V746M309.5 748V776M412.5 749V774M623.5 756V767M672.5 745V783M917.5 746V777M1156.5 750V777M349.5 770V805M366.5 777V810M711.5 787V796M786.5 778V807M844.5 757V812M1368.5 773V806M731.5 803V835M748.5 805V836M819.5 810V834M1359.5 810V834M289.5 835V866M561.5 833V866M817.5 829V868M886.5 833V866M1025.5 832V868M1166.5 823V876M987.5 863V896M1004.5 866V900M1155.5 868V895M1294.5 865V896M1374.5 872V894M312.5 907V917M681.5 901V929M962.5 898V929"/>
</g>
<g font-family="Liberation Sans" fill="#000">
<text x="277" y="121" font-size="16">Département de géologie et de génie géologique</text>
<text x="277" y="140" font-size="16">Faculté des sciences et de génie</text>
<text x="277" y="159" font-size="16">Université Laval</text>
<text x="839.5" y="142" font-size="21.5" text-anchor="middle">Séismographe QCQ (CGC/GSC)</text>
<text x="840" y="1001" font-size="18.15" text-anchor="middle">Minutes écoulées</text>
<text x="352.5" y="178" font-size="13.33" text-anchor="middle">02</text>
<text x="352.5" y="960" font-size="13.33" text-anchor="middle">02</text>
<text x="427.5" y="178" font-size="13.33" text-anchor="middle">04</text>
<text x="427.5" y="960" font-size="13.33" text-anchor="middle">04</text>
<text x="502.5" y="178" font-size="13.33" text-anchor="middle">06</text>
<text x="502.5" y="960" font-size="13.33" text-anchor="middle">06</text>
<text x="577.5" y="178" font-size="13.33" text-anchor="middle">08</text>
<text x="577.5" y="960" font-size="13.33" text-anchor="middle">08</text>
<text x="652.5" y="178" font-size="13.33" text-anchor="middle">10</text>
<text x="652.5" y="960" font-size="13.33" text-anchor="middle">10</text>
<text x="727.5" y="178" font-size="13.33" text-anchor="middle">12</text>
<text x="727.5" y="960" font-size="13.33" text-anchor="middle">12</text>
<text x="802.5" y="178" font-size="13.33" text-anchor="middle">14</text>
<text x="802.5" y="960" font-size="13.33" text-anchor="middle">14</text>
<text x="876.5" y="178" font-size="13.33" text-anchor="middle">16</text>
<text x="876.5" y="960" font-size="13.33" text-anchor="middle">16</text>
<text x="951.5" y="178" font-size="13.33" text-anchor="middle">18</text>
<text x="951.5" y="960" font-size="13.33" text-anchor="middle">18</text>
<text x="1026.5" y="178" font-size="13.33" text-anchor="middle">20</text>
<text x="1026.5" y="960" font-size="13.33" text-anchor="middle">20</text>
<text x="1101.5" y="178" font-size="13.33" text-anchor="middle">22</text>
<text x="1101.5" y="960" font-size="13.33" text-anchor="middle">22</text>
<text x="1176.5" y="178" font-size="13.33" text-anchor="middle">24</text>
<text x="1176.5" y="960" font-size="13.33" text-anchor="middle">24</text>
<text x="1251.5" y="178" font-size="13.33" text-anchor="middle">26</text>
<text x="1251.5" y="960" font-size="13.33" text-anchor="middle">26</text>
<text x="1326.5" y="178" font-size="13.33" text-anchor="middle">28</text>
<text x="1326.5" y="960" font-size="13.33" text-anchor="middle">28</text>
<text x="1407" y="220" font-size="13.33" letter-spacing="-0.25">12:30</text>
<text x="1407" y="251" font-size="13.33" letter-spacing="-0.25">13:00</text>
<text x="1407" y="281" font-size="13.33" letter-spacing="-0.25">13:30</text>
<text x="1407" y="311" font-size="13.33" letter-spacing="-0.25">14:00</text>
<text x="1407" y="342" font-size="13.33" letter-spacing="-0.25">14:30</text>
<text x="1407" y="372" font-size="13.33" letter-spacing="-0.25">15:00</text>
<text x="1407" y="402" font-size="13.33" letter-spacing="-0.25">15:30</text>
<text x="1407" y="433" font-size="13.33" letter-spacing="-0.25">16:00</text>
<text x="1407" y="463" font-size="13.33" letter-spacing="-0.25">16:30</text>
<text x="1407" y="493" font-size="13.33" letter-spacing="-0.25">17:00</text>
<text x="1407" y="524" font-size="13.33" letter-spacing="-0.25">17:30</text>
<text x="1407" y="554" font-size="13.33" letter-spacing="-0.25">18:00</text>
<text x="1407" y="584" font-size="13.33" letter-spacing="-0.25">18:30</text>
<text x="1407" y="614" font-size="13.33" letter-spacing="-0.25">19:00</text>
<text x="1407" y="645" font-size="13.33" letter-spacing="-0.25">19:30</text>
<text x="1407" y="675" font-size="13.33" letter-spacing="-0.25">20:00</text>
<text x="1407" y="705" font-size="13.33" letter-spacing="-0.25">20:30</text>
<text x="1407" y="736" font-size="13.33" letter-spacing="-0.25">21:00</text>
<text x="1407" y="766" font-size="13.33" letter-spacing="-0.25">21:30</text>
<text x="1407" y="796" font-size="13.33" letter-spacing="-0.25">22:00</text>
<text x="1407" y="827" font-size="13.33" letter-spacing="-0.25">22:30</text>
<text x="1407" y="857" font-size="13.33" letter-spacing="-0.25">23:00</text>
<text x="1407" y="887" font-size="13.33" letter-spacing="-0.25">23:30</text>
<text x="1407" y="918" font-size="13.33" letter-spacing="-0.25">24:00</text>
</g>
<text x="1405.3" y="192" font-family="Liberation Sans" font-size="18.4" fill="#ff0000">UTC</text>
</svg>
<svg width="1680" height="1050" style="position:absolute;left:0;top:0">
<path d="M1300.3 114.3H1332.7V146.8Q1332.7 150.8 1328.7 150.8H1319.2L1316.5 155.2L1313.8 150.8H1304.3Q1300.3 150.8 1300.3 146.8Z" fill="#e3211b" stroke="#6a0f0f" stroke-width="1"/>
<rect x="1313.2" y="114.7" width="6.6" height="36.3" fill="#f7c11b"/>
<rect x="1300.7" y="129.3" width="31.6" height="6.6" fill="#f7c11b"/>
<path d="M1314.4 151L1316.5 154.5L1318.6 151Z" fill="#f7c11b"/>
<g fill="#2b8fd8">
<circle cx="1316.5" cy="122.2" r="2.2"/><circle cx="1307.2" cy="132.6" r="2.2"/><circle cx="1316.5" cy="132.6" r="2.2"/><circle cx="1325.7" cy="132.6" r="2.2"/><circle cx="1316.5" cy="143" r="2.2"/>
</g>
<g fill="#e8e8e8">
<path d="M1302.2 117.6Q1304.2 115.6 1306.2 117.6Q1306.4 119.8 1304.8 120.0L1304.2 121.39999999999999L1303.6000000000001 120.0Q1302.0 119.8 1302.2 117.6Z"/><path d="M1302.2 124.5Q1304.2 122.5 1306.2 124.5Q1306.4 126.7 1304.8 126.9L1304.2 128.3L1303.6000000000001 126.9Q1302.0 126.7 1302.2 124.5Z"/><path d="M1302.2 138.3Q1304.2 136.3 1306.2 138.3Q1306.4 140.5 1304.8 140.7L1304.2 142.1L1303.6000000000001 140.7Q1302.0 140.5 1302.2 138.3Z"/><path d="M1302.2 145.10000000000002Q1304.2 143.10000000000002 1306.2 145.10000000000002Q1306.4 147.3 1304.8 147.5L1304.2 148.9L1303.6000000000001 147.5Q1302.0 147.3 1302.2 145.10000000000002Z"/><path d="M1307.9 117.6Q1309.9 115.6 1311.9 117.6Q1312.1000000000001 119.8 1310.5 120.0L1309.9 121.39999999999999L1309.3000000000002 120.0Q1307.7 119.8 1307.9 117.6Z"/><path d="M1307.9 124.5Q1309.9 122.5 1311.9 124.5Q1312.1000000000001 126.7 1310.5 126.9L1309.9 128.3L1309.3000000000002 126.9Q1307.7 126.7 1307.9 124.5Z"/><path d="M1307.9 138.3Q1309.9 136.3 1311.9 138.3Q1312.1000000000001 140.5 1310.5 140.7L1309.9 142.1L1309.3000000000002 140.7Q1307.7 140.5 1307.9 138.3Z"/><path d="M1307.9 145.10000000000002Q1309.9 143.10000000000002 1311.9 145.10000000000002Q1312.1000000000001 147.3 1310.5 147.5L1309.9 148.9L1309.3000000000002 147.5Q1307.7 147.3 1307.9 145.10000000000002Z"/><path d="M1320.8 117.6Q1322.8 115.6 1324.8 117.6Q1325.0 119.8 1323.3999999999999 120.0L1322.8 121.39999999999999L1322.2 120.0Q1320.6 119.8 1320.8 117.6Z"/><path d="M1320.8 124.5Q1322.8 122.5 1324.8 124.5Q1325.0 126.7 1323.3999999999999 126.9L1322.8 128.3L1322.2 126.9Q1320.6 126.7 1320.8 124.5Z"/><path d="M1320.8 138.3Q1322.8 136.3 1324.8 138.3Q1325.0 140.5 1323.3999999999999 140.7L1322.8 142.1L1322.2 140.7Q1320.6 140.5 1320.8 138.3Z"/><path d="M1320.8 145.10000000000002Q1322.8 143.10000000000002 1324.8 145.10000000000002Q1325.0 147.3 1323.3999999999999 147.5L1322.8 148.9L1322.2 147.5Q1320.6 147.3 1320.8 145.10000000000002Z"/><path d="M1326.5 117.6Q1328.5 115.6 1330.5 117.6Q1330.7 119.8 1329.1 120.0L1328.5 121.39999999999999L1327.9 120.0Q1326.3 119.8 1326.5 117.6Z"/><path d="M1326.5 124.5Q1328.5 122.5 1330.5 124.5Q1330.7 126.7 1329.1 126.9L1328.5 128.3L1327.9 126.9Q1326.3 126.7 1326.5 124.5Z"/><path d="M1326.5 138.3Q1328.5 136.3 1330.5 138.3Q1330.7 140.5 1329.1 140.7L1328.5 142.1L1327.9 140.7Q1326.3 140.5 1326.5 138.3Z"/><path d="M1326.5 145.10000000000002Q1328.5 143.10000000000002 1330.5 145.10000000000002Q1330.7 147.3 1329.1 147.5L1328.5 148.9L1327.9 147.5Q1326.3 147.3 1326.5 145.10000000000002Z"/>
</g>
<text x="1338.4" y="126.5" font-family="Liberation Sans" font-size="10" letter-spacing="0.24" fill="#262626" stroke="#262626" stroke-width="0.15">UNIVERSITÉ</text>
<text x="1338.4" y="146" font-family="Liberation Sans" font-size="23" textLength="62.6" lengthAdjust="spacingAndGlyphs" fill="#1a1a1a">LAVAL</text>
</svg>
</body></html>
